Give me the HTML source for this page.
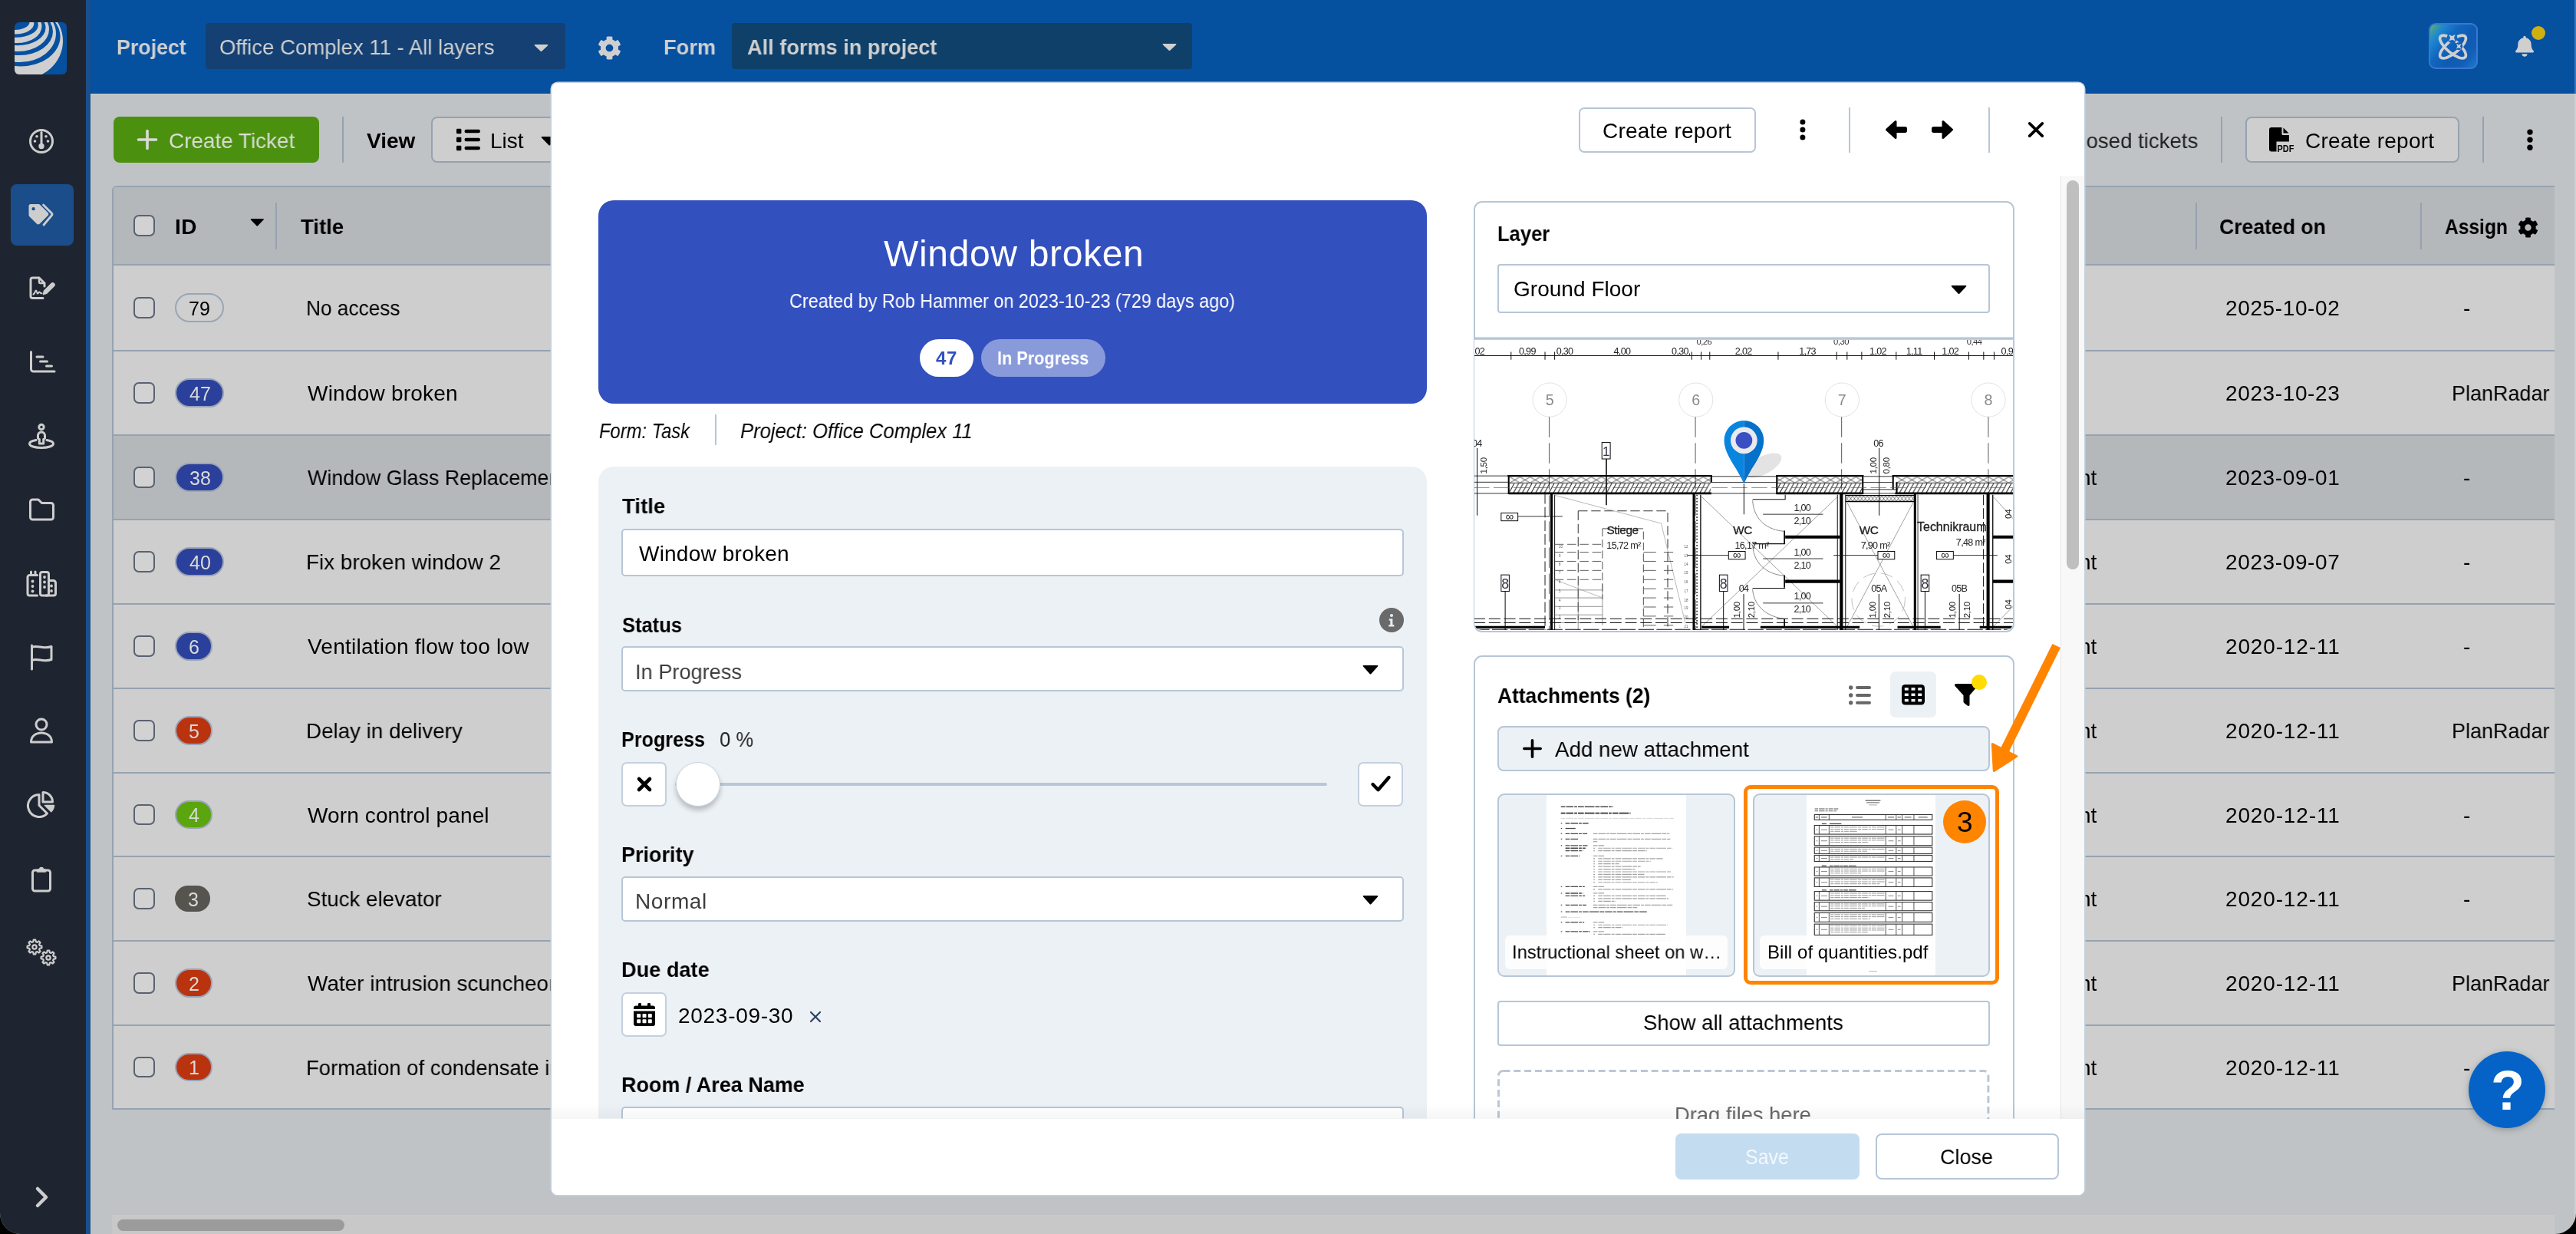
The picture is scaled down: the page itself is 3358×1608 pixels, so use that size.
<!DOCTYPE html>
<html lang="en"><head><meta charset="utf-8"><title>PlanRadar - Tickets</title>
<style>
html,body{margin:0;padding:0;background:#000;overflow:hidden}
body{width:3358px;height:1608px;position:relative;font-family:"Liberation Sans", sans-serif}
#app{position:absolute;left:0;top:0;width:3358px;height:1608px;overflow:hidden;background:#bfc3c6;border-radius:0 0 27px 27px}
#app div,#app svg,#app span{position:absolute}
#app svg{overflow:visible;display:block}
.t{white-space:nowrap;line-height:1;transform-origin:0 0;will-change:transform}
</style></head><body><div id="app">
<div style="left:0px;top:0px;width:112px;height:1608px;background:#1f2530"></div>
<div style="left:112px;top:0px;width:6px;height:1608px;background:#1b4f8c"></div>
<svg style="left:19px;top:29px;" width="68" height="68" viewBox="0 0 68 68"><defs><clipPath id="lg"><rect width="68" height="68" rx="6"/></clipPath></defs><g clip-path="url(#lg)"><rect width="68" height="68" fill="#0650a0"/><path d="M-22.98 1.77A24.14 13.75 0 1 0 25.30 1.77A24.14 13.75 0 1 0 -22.98 1.77ZM-19.50 0.00A19.50 9.90 0 1 0 19.50 0.00A19.50 9.90 0 1 0 -19.50 0.00Z" fill="#cfcfcf" fill-rule="evenodd"/><path d="M-29.10 5.37A32.30 21.74 0 1 0 35.50 5.37A32.30 21.74 0 1 0 -29.10 5.37ZM-26.28 3.76A28.54 15.99 0 1 0 30.80 3.76A28.54 15.99 0 1 0 -26.28 3.76Z" fill="#cfcfcf" fill-rule="evenodd"/><path d="M-34.80 9.22A39.90 28.81 0 1 0 45.00 9.22A39.90 28.81 0 1 0 -34.80 9.22ZM-32.10 7.18A36.30 23.08 0 1 0 40.50 7.18A36.30 23.08 0 1 0 -32.10 7.18Z" fill="#cfcfcf" fill-rule="evenodd"/><path d="M-40.20 14.71A47.10 37.39 0 1 0 54.00 14.71A47.10 37.39 0 1 0 -40.20 14.71ZM-37.80 12.21A43.90 30.79 0 1 0 50.00 12.21A43.90 30.79 0 1 0 -37.80 12.21Z" fill="#cfcfcf" fill-rule="evenodd"/><path d="M-45.60 24.48A54.30 50.17 0 1 0 63.00 24.48A54.30 50.17 0 1 0 -45.60 24.48ZM-43.50 18.80A51.50 38.67 0 1 0 59.50 18.80A51.50 38.67 0 1 0 -43.50 18.80Z" fill="#cfcfcf" fill-rule="evenodd"/></g></svg>
<div style="left:14px;top:240px;width:82px;height:79.5px;background:#1b4d8b;border-radius:8px"></div>
<svg style="left:33.5px;top:163.5px;" width="40" height="40" viewBox="0 0 40 40"><g fill="none" stroke="#cdcdcd" stroke-width="3" stroke-linecap="round" stroke-linejoin="round"><circle cx="20" cy="20" r="14.5"/><path d="M20 8.5V26"/><circle cx="20" cy="26.5" r="2.2" fill="#cdcdcd"/><g stroke-width="0" fill="#cdcdcd"><circle cx="11.5" cy="20" r="1.8"/><circle cx="28.5" cy="20" r="1.8"/><circle cx="14" cy="13.7" r="1.8"/><circle cx="26" cy="13.7" r="1.8"/></g></g></svg>
<svg style="left:32px;top:259.5px;" width="40" height="40" viewBox="0 0 40 40"><path d="M5.5 8.5 a2.5 2.5 0 0 1 2.5-2.5 h10.2 a3 3 0 0 1 2.1 .9 l10 10 a3 3 0 0 1 0 4.2 l-10.4 10.4 a3 3 0 0 1-4.2 0 l-9.3-9.3 a3 3 0 0 1-.9-2.1z" fill="#cdcdcd"/><circle cx="11.6" cy="12.2" r="2.1" fill="#1b4d8b"/><path d="M24.5 7 L35.3 17.8 a2.2 2.2 0 0 1 0 3 L25 33" fill="none" stroke="#cdcdcd" stroke-width="2.8" stroke-linecap="round"/></svg>
<svg style="left:33.5px;top:355.7px;" width="40" height="40" viewBox="0 0 40 40"><g fill="none" stroke="#cdcdcd" stroke-width="3" stroke-linecap="round" stroke-linejoin="round"><path d="M22 32.5H8.5a2.5 2.5 0 0 1-2.500-2.500V8.5A2.5 2.500 0 0 1 8.500 6H17l7 7v4"/><path d="M17 6v5.500a1.500 1.500 0 0 0 1.500 1.500H24" stroke-width="2.4"/><path d="M9.5 27.5c2-1 2.500-5 3.500-5s.8 4 2 4 1.200-2 2.200-2 1 1.800 3.300 1.800" stroke-width="2"/><path d="M22.500 27.500l1-4.500 9.500-9.500a2.300 2.300 0 0 1 3.300 3.300l-9.500 9.500z" fill="#cdcdcd" stroke-width="1.500"/></g></svg>
<svg style="left:33.5px;top:451.8px;" width="40" height="40" viewBox="0 0 40 40"><g fill="none" stroke="#cdcdcd" stroke-width="3" stroke-linecap="round" stroke-linejoin="round"><path d="M6.5 6.500V29a3 3 0 0 0 3 3H37"/><path d="M14 13h8M18.500 19h9M26.500 25h7" stroke-width="3"/></g></svg>
<svg style="left:33.5px;top:547.9px;" width="40" height="40" viewBox="0 0 40 40"><g fill="none" stroke="#cdcdcd" stroke-width="3" stroke-linecap="round" stroke-linejoin="round"><circle cx="20" cy="8.500" r="3.200"/><path d="M15.500 19.500a4.500 4.500 0 0 1 9 0v3.500l-1.800 1.500V30h-5.400v-5.500l-1.800-1.500z"/><path d="M13 25.500c-5 .8-8.500 2.600-8.500 4.700 0 3 6.900 5.300 15.500 5.300s15.500-2.300 15.500-5.300c0-2.100-3.500-3.900-8.500-4.700"/></g></svg>
<svg style="left:33.5px;top:644px;" width="40" height="40" viewBox="0 0 40 40"><g fill="none" stroke="#cdcdcd" stroke-width="3" stroke-linecap="round" stroke-linejoin="round"><path d="M5.500 10a3 3 0 0 1 3-3h7.500l4.500 4.500H32.500a3 3 0 0 1 3 3V30a3 3 0 0 1-3 3h-24a3 3 0 0 1-3-3z"/></g></svg>
<svg style="left:33.5px;top:740.1px;" width="40" height="40" viewBox="0 0 40 40"><g fill="none" stroke="#cdcdcd" stroke-width="3" stroke-linecap="round" stroke-linejoin="round"><path d="M14.500 36H4.500a2.500 2.500 0 0 1-2.500-2.500V12a2.500 2.500 0 0 1 2.500-2.500H14.500"/><path d="M6.500 9V5M12 9V5"/><rect x="18.500" y="5.500" width="11" height="30.500" rx="2.500"/><path d="M29.500 16.500h6a3 3 0 0 1 3 3V33.500a2.500 2.500 0 0 1-2.500 2.500H26"/><g stroke-width="0" fill="#cdcdcd"><circle cx="8.500" cy="17.500" r="1.900"/><circle cx="8.500" cy="24" r="1.900"/><circle cx="8.500" cy="30.500" r="1.900"/><circle cx="24" cy="12" r="1.900"/><circle cx="24" cy="18.500" r="1.900"/><circle cx="24" cy="25" r="1.900"/><circle cx="33" cy="23.500" r="1.900"/><circle cx="33" cy="30" r="1.900"/></g></g></svg>
<svg style="left:33.5px;top:836.2px;" width="40" height="40" viewBox="0 0 40 40"><g fill="none" stroke="#cdcdcd" stroke-width="3" stroke-linecap="round" stroke-linejoin="round"><path d="M7.500 5v31"/><path d="M7.500 7.500c8-3.500 14 3 25.500-1v17c-11.500 4-17.500-2.500-25.500 1"/></g></svg>
<svg style="left:33.5px;top:932.3px;" width="40" height="40" viewBox="0 0 40 40"><g fill="none" stroke="#cdcdcd" stroke-width="3" stroke-linecap="round" stroke-linejoin="round"><circle cx="20" cy="12" r="7"/><path d="M6.500 35c0-7.500 6-12 13.500-12s13.500 4.500 13.500 12z"/></g></svg>
<svg style="left:33.5px;top:1028.4px;" width="40" height="40" viewBox="0 0 40 40"><g fill="none" stroke="#cdcdcd" stroke-width="3" stroke-linecap="round" stroke-linejoin="round"><path d="M17 7.500A14.500 14.500 0 1 0 27.500 32L17 21.500z"/><path d="M22 4.500v12.500h12.500A12.500 12.500 0 0 0 22 4.500z"/><path d="M24.500 21.500h12a13 13 0 0 1-3.700 8.300z" fill="#cdcdcd" stroke-width="1.500"/></g></svg>
<svg style="left:33.5px;top:1124.5px;" width="40" height="40" viewBox="0 0 40 40"><g fill="none" stroke="#cdcdcd" stroke-width="3" stroke-linecap="round" stroke-linejoin="round"><rect x="8.500" y="9" width="23" height="27" rx="3"/><path d="M14.500 9.500c0-1.500 2-2 3-2a2.600 2.600 0 0 1 5 0c1 0 3 .5 3 2v1.500h-11z" fill="#cdcdcd" stroke-width="1.500"/></g></svg>
<svg style="left:33.5px;top:1220.6px;" width="40" height="40" viewBox="0 0 40 40"><g fill="none" stroke="#cdcdcd" stroke-width="3" stroke-linecap="round" stroke-linejoin="round"><path d="M20.42 11.77 L20.42 14.23 L17.79 14.83 L17.09 16.51 L18.53 18.79 L16.79 20.53 L14.51 19.09 L12.83 19.79 L12.23 22.42 L9.77 22.42 L9.17 19.79 L7.49 19.09 L5.21 20.53 L3.47 18.79 L4.91 16.51 L4.21 14.83 L1.58 14.23 L1.58 11.77 L4.21 11.17 L4.91 9.49 L3.47 7.21 L5.21 5.47 L7.49 6.91 L9.17 6.21 L9.77 3.58 L12.23 3.58 L12.83 6.21 L14.51 6.91 L16.79 5.47 L18.53 7.21 L17.09 9.49 L17.79 11.17Z" stroke-width="2.200"/><circle cx="11" cy="13" r="2.66" stroke-width="2.200"/><path d="M38.42 25.77 L38.42 28.23 L35.79 28.83 L35.09 30.51 L36.53 32.79 L34.79 34.53 L32.51 33.09 L30.83 33.79 L30.23 36.42 L27.77 36.42 L27.17 33.79 L25.49 33.09 L23.21 34.53 L21.47 32.79 L22.91 30.51 L22.21 28.83 L19.58 28.23 L19.58 25.77 L22.21 25.17 L22.91 23.49 L21.47 21.21 L23.21 19.47 L25.49 20.91 L27.17 20.21 L27.77 17.58 L30.23 17.58 L30.83 20.21 L32.51 20.91 L34.79 19.47 L36.53 21.21 L35.09 23.49 L35.79 25.17Z" stroke-width="2.200"/><circle cx="29" cy="27" r="2.66" stroke-width="2.200"/></g></svg>
<svg style="left:36px;top:1542px;" width="36" height="36" viewBox="0 0 36 36"><path d="M13 7l11 11-11 11" fill="none" stroke="#cdcdcd" stroke-width="4.500" stroke-linecap="round" stroke-linejoin="round"/></svg>
<div style="left:118px;top:0px;width:3240px;height:121.5px;background:#0650a0;border-bottom:1px solid #034597;box-sizing:border-box"></div>
<span class="t" style="left:151.64px;top:48.2px;font-size:28px;color:#cfcfcf;font-weight:700;transform:scaleX(0.9551);">Project</span>
<div style="left:267.5px;top:30px;width:469.5px;height:59.7px;background:#144073;border-radius:4px"></div>
<span class="t" style="left:286.02px;top:48.2px;font-size:28px;color:#cfcfcf;transform:scaleX(0.9830);">Office Complex 11 - All layers</span>
<svg style="left:695.8px;top:58.25px;" width="19" height="9.5" viewBox="0 0 19 9.5"><path d="M1.500 0H17.5Q19 0 18 1.500L10.5 8.5Q9.5 9.5 8.5 8.5L1 1.500Q0 0 1.500 0Z" fill="#cfcfcf"/></svg>
<svg style="left:779.1px;top:46.5px;" width="31" height="31" viewBox="0 0 512 512"><path d="M487.4 315.700l-42.600-24.600c4.300-23.200 4.300-47 0-70.200l42.600-24.600c4.900-2.800 7.100-8.600 5.500-14-11.100-35.600-30-67.800-54.700-94.600-3.800-4.100-10-5.100-14.800-2.300L380.800 110c-17.900-15.400-38.500-27.300-60.800-35.100V25.800c0-5.600-3.900-10.500-9.400-11.700-36.700-8.200-74.300-7.800-109.200 0-5.500 1.200-9.400 6.100-9.400 11.700V75c-22.200 7.900-42.800 19.800-60.800 35.100L88.700 85.500c-4.900-2.800-11-1.900-14.800 2.300-24.700 26.700-43.600 58.900-54.700 94.600-1.700 5.400.6 11.200 5.500 14L67.300 221c-4.300 23.200-4.300 47 0 70.200l-42.600 24.600c-4.900 2.800-7.100 8.600-5.500 14 11.100 35.600 30 67.800 54.700 94.600 3.800 4.100 10 5.100 14.800 2.300l42.600-24.600c17.900 15.400 38.500 27.300 60.800 35.100v49.200c0 5.600 3.900 10.500 9.400 11.700 36.700 8.200 74.300 7.800 109.200 0 5.500-1.200 9.400-6.100 9.400-11.700v-49.200c22.200-7.900 42.800-19.800 60.800-35.100l42.600 24.600c4.900 2.800 11 1.900 14.800-2.300 24.700-26.700 43.600-58.900 54.700-94.600 1.500-5.500-.7-11.300-5.600-14.100zM256 336c-44.100 0-80-35.900-80-80s35.900-80 80-80 80 35.900 80 80-35.900 80-80 80z" fill="#cfcfcf"/></svg>
<span class="t" style="left:864.83px;top:48.4px;font-size:28px;color:#cfcfcf;font-weight:700;transform:scaleX(0.9750);">Form</span>
<div style="left:954px;top:30px;width:600px;height:59.7px;background:#0f4069;border-radius:4px"></div>
<span class="t" style="left:974px;top:48.4px;font-size:28px;color:#cfcfcf;font-weight:700;transform:scaleX(0.9693);">All forms in project</span>
<svg style="left:1515px;top:57.25px;" width="19" height="9.5" viewBox="0 0 19 9.5"><path d="M1.500 0H17.5Q19 0 18 1.500L10.5 8.5Q9.5 9.5 8.5 8.5L1 1.500Q0 0 1.500 0Z" fill="#cfcfcf"/></svg>
<div style="left:3166.2px;top:30px;width:63.8px;height:60px;background:linear-gradient(128deg,#72b955 0%,#3c9aa5 9%,#1b86d0 20%,#1266be 38%,#0f5ab3 60%,#125fb8 80%,#1c7bcd 100%);border-radius:9px;border:2px solid #3877d1;box-sizing:border-box"></div>
<svg style="left:3166px;top:30px;" width="64" height="60" viewBox="0 0 64 60"><g fill="none" stroke="#cfcfcf" stroke-width="3.700" stroke-linecap="round"><ellipse cx="31.500" cy="31" rx="21" ry="8" transform="rotate(40 31.500 31)"/><ellipse cx="31.500" cy="31" rx="21" ry="8" transform="rotate(-40 31.500 31)"/></g><circle cx="30.500" cy="19.300" r="6.800" fill="#1367c0"/><circle cx="39.200" cy="30.300" r="5" fill="#105db6"/><path d="M30.500 13.300l1.700 4.300 4.300 1.700-4.300 1.700-1.700 4.300-1.700-4.300-4.300-1.700 4.300-1.700z" fill="#cfcfcf" transform="rotate(45 30.500 19.300)"/><path d="M39.200 25.800l1.300 3.200 3.200 1.300-3.200 1.300-1.300 3.200-1.300-3.200-3.200-1.300 3.200-1.300z" fill="#cfcfcf" transform="rotate(45 39.200 30.300)"/></svg>
<svg style="left:3278px;top:45.3px;" width="26" height="30" viewBox="0 1 30 33.500"><path d="M15 2.500a2 2 0 0 1 2 2v.8c4.600 1 8 4.800 8 9.700 0 5.500 1.500 8 3.500 10 .8.800.3 2.500-1 2.500H2.500c-1.300 0-1.800-1.700-1-2.500 2-2 3.500-4.500 3.500-10 0-4.900 3.400-8.700 8-9.700v-.8a2 2 0 0 1 2-2z" fill="#cfcfcf"/><path d="M11 29.500h8a4 4 0 0 1-8 0z" fill="#cfcfcf"/></svg>
<div style="left:3299.9px;top:33.8px;width:18.2px;height:18.2px;background:#cfaf12;border-radius:50%"></div>
<div style="left:3356px;top:0px;width:2px;height:1608px;background:rgba(255,255,255,.22)"></div>
<div style="left:118px;top:122px;width:3240px;height:1px;background:#c7cacc"></div>
<div style="left:118px;top:122px;width:1px;height:1486px;background:#c7cacc"></div>
<div style="left:148px;top:152px;width:268px;height:60px;background:#4c9010;border-radius:8px"></div>
<svg style="left:179px;top:169.2px;" width="26" height="26" viewBox="0 0 26 26"><path d="M13 1.500v23M1.500 13h23" stroke="#d9ddd5" stroke-width="3.600" stroke-linecap="round"/></svg>
<span class="t" style="left:219.6px;top:169.7px;font-size:28px;color:#d9ddd5;transform:scaleX(0.9959);">Create Ticket</span>
<div style="left:446px;top:152px;width:2px;height:60px;background:#96a2b0"></div>
<span class="t" style="left:477.8px;top:169.7px;font-size:28px;color:#000;font-weight:700;transform:scaleX(0.9949);">View</span>
<div style="left:562px;top:152px;width:260px;height:59.5px;box-sizing:border-box;border:2px solid #96a2b0;border-radius:8px;background:#cecece"></div>
<svg style="left:595px;top:167px;" width="31" height="30" viewBox="0 0 31 30"><g fill="#000"><rect x="0" y="0.7999999999999998" width="6.400" height="6.400" rx="1.200"/><rect x="10.500" y="1.7999999999999998" width="20.500" height="4.400" rx="2.200"/><rect x="0" y="11.8" width="6.400" height="6.400" rx="1.200"/><rect x="10.500" y="12.8" width="20.500" height="4.400" rx="2.200"/><rect x="0" y="22.8" width="6.400" height="6.400" rx="1.200"/><rect x="10.500" y="23.8" width="20.500" height="4.400" rx="2.200"/></g></svg>
<span class="t" style="left:639px;top:169.7px;font-size:28px;color:#000;transform:scaleX(0.9978);">List</span>
<svg style="left:705.25px;top:177.5px;" width="22.5" height="12" viewBox="0 0 22.5 12"><path d="M1.500 0H21.0Q22.5 0 21.5 1.500L12.25 11Q11.25 12 10.25 11L1 1.500Q0 0 1.500 0Z" fill="#000"/></svg>
<span class="t" style="left:2623.42px;top:169.7px;font-size:28px;color:#222;transform:scaleX(0.9853);">Show closed tickets</span>
<div style="left:2895px;top:152px;width:2px;height:60px;background:#96a2b0"></div>
<div style="left:2927px;top:152px;width:278.5px;height:59.5px;box-sizing:border-box;border:2px solid #96a2b0;border-radius:8px;background:#cecece"></div>
<svg style="left:2958px;top:166px;will-change:transform" width="34" height="32" viewBox="0 0 34 32"><path d="M3 0h13.500v8.500a1.500 1.500 0 0 0 1.500 1.500H26v8.500H9.500V31.500H3a3 3 0 0 1-3-3V3a3 3 0 0 1 3-3z" fill="#000"/><path d="M18.500 0.500l7 7h-7z" fill="#000"/><text x="10.500" y="31.500" font-family='"Liberation Sans", sans-serif' font-weight="700" font-size="12.500" fill="#000" textLength="22" lengthAdjust="spacingAndGlyphs">PDF</text></svg>
<span class="t" style="left:3005px;top:169.7px;font-size:28px;color:#000;letter-spacing:0.26px;">Create report</span>
<div style="left:3236px;top:152px;width:2px;height:60px;background:#96a2b0"></div>
<svg style="left:3292px;top:165px;" width="12" height="36" viewBox="0 0 12 36"><circle cx="6" cy="7.100" r="3.700"/><circle cx="6" cy="17.100" r="3.700"/><circle cx="6" cy="27.200" r="3.700"/></svg>
<div style="left:146px;top:242px;width:3184px;height:1204px;box-sizing:border-box;border:2px solid #96a2b0;border-right:none;border-radius:6px 0 0 0;background:#cecece"></div>
<div style="left:148px;top:244px;width:3182px;height:100px;background:#b4b8bb;border-radius:4px 0 0 0"></div>
<div style="left:146px;top:344px;width:3184px;height:2px;background:#96a2b0"></div>
<div style="left:174.3px;top:280.2px;width:27.5px;height:27.5px;box-sizing:border-box;border:2px solid #596270;border-radius:7px;background:#d2d2d2"></div>
<span class="t" style="left:228.3px;top:281.6px;font-size:28px;color:#000;font-weight:700;letter-spacing:0.52px;">ID</span>
<svg style="left:325.55px;top:285px;" width="18.5" height="10" viewBox="0 0 18.5 10"><path d="M1.500 0H17.0Q18.5 0 17.5 1.500L10.25 9Q9.25 10 8.25 9L1 1.500Q0 0 1.500 0Z" fill="#000"/></svg>
<div style="left:359px;top:264px;width:2px;height:61px;background:#96a2b0"></div>
<div style="left:2862px;top:264px;width:2px;height:61px;background:#96a2b0"></div>
<div style="left:3155px;top:264px;width:2px;height:61px;background:#96a2b0"></div>
<span class="t" style="left:392px;top:281.6px;font-size:28px;color:#000;font-weight:700;transform:scaleX(0.9826);">Title</span>
<span class="t" style="left:2893.05px;top:281.6px;font-size:28px;color:#000;font-weight:700;transform:scaleX(0.9490);">Created on</span>
<span class="t" style="left:3187.4px;top:281.6px;font-size:28px;color:#000;font-weight:700;transform:scaleX(0.8770);">Assign</span>
<svg style="left:3281.5px;top:282.5px;" width="27" height="27" viewBox="0 0 512 512"><path d="M487.4 315.700l-42.600-24.600c4.300-23.200 4.300-47 0-70.200l42.600-24.600c4.900-2.800 7.100-8.600 5.500-14-11.100-35.600-30-67.800-54.700-94.600-3.800-4.100-10-5.100-14.800-2.300L380.800 110c-17.900-15.400-38.500-27.300-60.800-35.100V25.800c0-5.600-3.900-10.500-9.400-11.700-36.700-8.200-74.300-7.800-109.200 0-5.500 1.200-9.400 6.100-9.400 11.700V75c-22.200 7.900-42.800 19.800-60.800 35.100L88.700 85.500c-4.900-2.800-11-1.900-14.800 2.300-24.700 26.700-43.600 58.900-54.700 94.600-1.700 5.400.6 11.200 5.500 14L67.300 221c-4.300 23.200-4.300 47 0 70.200l-42.600 24.600c-4.900 2.800-7.100 8.600-5.500 14 11.100 35.600 30 67.800 54.700 94.600 3.800 4.100 10 5.100 14.800 2.300l42.600-24.600c17.900 15.400 38.500 27.300 60.800 35.100v49.200c0 5.600 3.900 10.500 9.400 11.700 36.700 8.200 74.300 7.800 109.200 0 5.500-1.200 9.400-6.100 9.400-11.700v-49.200c22.200-7.900 42.800-19.800 60.800-35.100l42.600 24.600c4.900 2.800 11 1.900 14.800-2.300 24.700-26.700 43.600-58.900 54.700-94.600 1.500-5.500-.7-11.300-5.600-14.100zM256 336c-44.100 0-80-35.900-80-80s35.900-80 80-80 80 35.900 80 80-35.900 80-80 80z" fill="#000"/></svg>
<div style="left:146px;top:456px;width:3184px;height:2px;background:#96a2b0"></div>
<div style="left:174.3px;top:387.25px;width:27.5px;height:27.5px;box-sizing:border-box;border:2px solid #596270;border-radius:7px;background:#d2d2d2"></div>
<div style="left:228.3px;top:382.35px;width:63.5px;height:37.3px;box-sizing:border-box;border:2px solid #98a6b5;border-radius:19px;background:#cfcfcf"></div>
<span class="t" style="left:246.1px;top:389.84px;font-size:25px;color:#000;">79</span>
<span class="t" style="left:399.33px;top:388.3px;font-size:28px;color:#000;transform:scaleX(0.9364);">No access</span>
<span class="t" style="left:2901px;top:388.3px;font-size:28px;color:#000;letter-spacing:0.62px;">2025-10-02</span>
<span class="t" style="left:3210.5px;top:388.3px;font-size:28px;color:#000;">-</span>
<div style="left:146px;top:566px;width:3184px;height:2px;background:#96a2b0"></div>
<div style="left:174.3px;top:498.25px;width:27.5px;height:27.5px;box-sizing:border-box;border:2px solid #596270;border-radius:7px;background:#d2d2d2"></div>
<div style="left:228.3px;top:493.35px;width:63.5px;height:37.3px;box-sizing:border-box;border:2px solid #9aa3b8;border-radius:19px;background:#2a409a"></div>
<span class="t" style="left:246.6px;top:500.84px;font-size:25px;color:#dadada;">47</span>
<span class="t" style="left:401.2px;top:499.3px;font-size:28px;color:#000;letter-spacing:0.22px;">Window broken</span>
<span class="t" style="left:2901px;top:499.3px;font-size:28px;color:#000;letter-spacing:0.62px;">2023-10-23</span>
<span class="t" style="left:3196.37px;top:499.3px;font-size:28px;color:#000;transform:scaleX(0.9632);">PlanRadar</span>
<div style="left:148px;top:568px;width:3182px;height:108px;background:#b4b8bb"></div>
<div style="left:146px;top:676px;width:3184px;height:2px;background:#96a2b0"></div>
<div style="left:174.3px;top:608.25px;width:27.5px;height:27.5px;box-sizing:border-box;border:2px solid #596270;border-radius:7px;background:#d2d2d2"></div>
<div style="left:228.3px;top:603.35px;width:63.5px;height:37.3px;box-sizing:border-box;border:2px solid #9aa3b8;border-radius:19px;background:#2a409a"></div>
<span class="t" style="left:246.6px;top:610.84px;font-size:25px;color:#dadada;">38</span>
<span class="t" style="left:401.2px;top:609.3px;font-size:28px;color:#000;transform:scaleX(0.9574);">Window Glass Replacement</span>
<span class="t" style="left:2710.43px;top:609.3px;font-size:28px;color:#000;">nt</span>
<span class="t" style="left:2901px;top:609.3px;font-size:28px;color:#000;letter-spacing:0.62px;">2023-09-01</span>
<span class="t" style="left:3210.5px;top:609.3px;font-size:28px;color:#000;">-</span>
<div style="left:146px;top:786px;width:3184px;height:2px;background:#96a2b0"></div>
<div style="left:174.3px;top:718.25px;width:27.5px;height:27.5px;box-sizing:border-box;border:2px solid #596270;border-radius:7px;background:#d2d2d2"></div>
<div style="left:228.3px;top:713.35px;width:63.5px;height:37.3px;box-sizing:border-box;border:2px solid #9aa3b8;border-radius:19px;background:#2a409a"></div>
<span class="t" style="left:246.6px;top:720.84px;font-size:25px;color:#dadada;">40</span>
<span class="t" style="left:399.21px;top:719.3px;font-size:28px;color:#000;transform:scaleX(0.9946);">Fix broken window 2</span>
<span class="t" style="left:2710.43px;top:719.3px;font-size:28px;color:#000;">nt</span>
<span class="t" style="left:2901px;top:719.3px;font-size:28px;color:#000;letter-spacing:0.62px;">2023-09-07</span>
<span class="t" style="left:3210.5px;top:719.3px;font-size:28px;color:#000;">-</span>
<div style="left:146px;top:896px;width:3184px;height:2px;background:#96a2b0"></div>
<div style="left:174.3px;top:828.25px;width:27.5px;height:27.5px;box-sizing:border-box;border:2px solid #596270;border-radius:7px;background:#d2d2d2"></div>
<div style="left:228.3px;top:823.35px;width:49px;height:37.3px;box-sizing:border-box;border:2px solid #9aa3b8;border-radius:19px;background:#2a409a"></div>
<span class="t" style="left:245.8px;top:830.84px;font-size:25px;color:#dadada;">6</span>
<span class="t" style="left:401.2px;top:829.3px;font-size:28px;color:#000;letter-spacing:0.23px;">Ventilation flow too low</span>
<span class="t" style="left:2710.43px;top:829.3px;font-size:28px;color:#000;">nt</span>
<span class="t" style="left:2901px;top:829.3px;font-size:28px;color:#000;letter-spacing:0.85px;">2020-12-11</span>
<span class="t" style="left:3210.5px;top:829.3px;font-size:28px;color:#000;">-</span>
<div style="left:146px;top:1006px;width:3184px;height:2px;background:#96a2b0"></div>
<div style="left:174.3px;top:938.25px;width:27.5px;height:27.5px;box-sizing:border-box;border:2px solid #596270;border-radius:7px;background:#d2d2d2"></div>
<div style="left:228.3px;top:933.35px;width:49px;height:37.3px;box-sizing:border-box;border:2px solid #9aa3b8;border-radius:19px;background:#b9330f"></div>
<span class="t" style="left:245.8px;top:940.84px;font-size:25px;color:#dadada;">5</span>
<span class="t" style="left:399.22px;top:939.3px;font-size:28px;color:#000;transform:scaleX(0.9920);">Delay in delivery</span>
<span class="t" style="left:2710.43px;top:939.3px;font-size:28px;color:#000;">nt</span>
<span class="t" style="left:2901px;top:939.3px;font-size:28px;color:#000;letter-spacing:0.85px;">2020-12-11</span>
<span class="t" style="left:3196.37px;top:939.3px;font-size:28px;color:#000;transform:scaleX(0.9632);">PlanRadar</span>
<div style="left:146px;top:1115px;width:3184px;height:2px;background:#96a2b0"></div>
<div style="left:174.3px;top:1047.75px;width:27.5px;height:27.5px;box-sizing:border-box;border:2px solid #596270;border-radius:7px;background:#d2d2d2"></div>
<div style="left:228.3px;top:1042.85px;width:49px;height:37.3px;box-sizing:border-box;border:2px solid #9aa3b8;border-radius:19px;background:#5ba50e"></div>
<span class="t" style="left:245.8px;top:1050.34px;font-size:25px;color:#dadada;">4</span>
<span class="t" style="left:401.2px;top:1048.8px;font-size:28px;color:#000;letter-spacing:0.12px;">Worn control panel</span>
<span class="t" style="left:2710.43px;top:1048.8px;font-size:28px;color:#000;">nt</span>
<span class="t" style="left:2901px;top:1048.8px;font-size:28px;color:#000;letter-spacing:0.85px;">2020-12-11</span>
<span class="t" style="left:3210.5px;top:1048.8px;font-size:28px;color:#000;">-</span>
<div style="left:146px;top:1225px;width:3184px;height:2px;background:#96a2b0"></div>
<div style="left:174.3px;top:1157.25px;width:27.5px;height:27.5px;box-sizing:border-box;border:2px solid #596270;border-radius:7px;background:#d2d2d2"></div>
<div style="left:228.3px;top:1153.85px;width:46px;height:34.3px;border-radius:19px;background:#55544e"></div>
<span class="t" style="left:244.8px;top:1159.84px;font-size:25px;color:#d9d9d9;">3</span>
<span class="t" style="left:400.21px;top:1158.3px;font-size:28px;color:#000;transform:scaleX(0.9904);">Stuck elevator</span>
<span class="t" style="left:2710.43px;top:1158.3px;font-size:28px;color:#000;">nt</span>
<span class="t" style="left:2901px;top:1158.3px;font-size:28px;color:#000;letter-spacing:0.85px;">2020-12-11</span>
<span class="t" style="left:3210.5px;top:1158.3px;font-size:28px;color:#000;">-</span>
<div style="left:146px;top:1335px;width:3184px;height:2px;background:#96a2b0"></div>
<div style="left:174.3px;top:1267.25px;width:27.5px;height:27.5px;box-sizing:border-box;border:2px solid #596270;border-radius:7px;background:#d2d2d2"></div>
<div style="left:228.3px;top:1262.35px;width:49px;height:37.3px;box-sizing:border-box;border:2px solid #9aa3b8;border-radius:19px;background:#b9330f"></div>
<span class="t" style="left:245.8px;top:1269.84px;font-size:25px;color:#dadada;">2</span>
<span class="t" style="left:401.2px;top:1268.3px;font-size:28px;color:#000;transform:scaleX(0.9974);">Water intrusion scuncheon</span>
<span class="t" style="left:2710.43px;top:1268.3px;font-size:28px;color:#000;">nt</span>
<span class="t" style="left:2901px;top:1268.3px;font-size:28px;color:#000;letter-spacing:0.85px;">2020-12-11</span>
<span class="t" style="left:3196.37px;top:1268.3px;font-size:28px;color:#000;transform:scaleX(0.9632);">PlanRadar</span>
<div style="left:174.3px;top:1376.75px;width:27.5px;height:27.5px;box-sizing:border-box;border:2px solid #596270;border-radius:7px;background:#d2d2d2"></div>
<div style="left:228.3px;top:1371.85px;width:49px;height:37.3px;box-sizing:border-box;border:2px solid #9aa3b8;border-radius:19px;background:#b9330f"></div>
<span class="t" style="left:245.8px;top:1379.34px;font-size:25px;color:#dadada;">1</span>
<span class="t" style="left:399.24px;top:1377.8px;font-size:28px;color:#000;transform:scaleX(0.9803);">Formation of condensate in room</span>
<span class="t" style="left:2710.43px;top:1377.8px;font-size:28px;color:#000;">nt</span>
<span class="t" style="left:2901px;top:1377.8px;font-size:28px;color:#000;letter-spacing:0.85px;">2020-12-11</span>
<span class="t" style="left:3210.5px;top:1377.8px;font-size:28px;color:#000;">-</span>
<div style="left:146px;top:1581.5px;width:3184px;height:26.5px;background:#c8c8c8;border-top:1px solid #c0c0c0"></div>
<div style="left:152.5px;top:1588.5px;width:296.5px;height:15px;background:#9b9b9b;border-radius:8px"></div>
<div style="left:718.5px;top:107.5px;width:1998.5px;height:1449.5px;background:#fff;border-radius:8px;box-shadow:0 0 0 1.500px #c4d1e1"></div>
<div style="left:2057.5px;top:139.5px;width:231.5px;height:59px;box-sizing:border-box;border:2px solid #b7c6d7;border-radius:7px;background:#fff"></div>
<span class="t" style="left:2089.3px;top:157px;font-size:28px;color:#000;letter-spacing:0.23px;">Create report</span>
<svg style="left:2344px;top:154px;" width="12" height="32" viewBox="0 0 12 32"><circle cx="5.900" cy="4.900" r="3.500"/><circle cx="5.900" cy="15.100" r="3.500"/><circle cx="5.900" cy="25.100" r="3.500"/></svg>
<div style="left:2410px;top:139.5px;width:2px;height:59px;background:#b7c6d7"></div>
<svg style="left:2456px;top:155px;" width="32" height="28" viewBox="0 0 32 28"><path d="M3.500 14L15 3.500V24.500Z" fill="#000" stroke="#000" stroke-width="3" stroke-linejoin="round"/><rect x="13" y="10.100" width="17" height="7.800" rx="2.600"/></svg>
<svg style="left:2516px;top:155px;" width="32" height="28" viewBox="0 0 32 28"><path d="M28.500 14L17 3.500V24.500Z" fill="#000" stroke="#000" stroke-width="3" stroke-linejoin="round"/><rect x="2" y="10.100" width="17" height="7.800" rx="2.600"/></svg>
<div style="left:2592px;top:139.5px;width:2px;height:59px;background:#b7c6d7"></div>
<svg style="left:2642px;top:157px;" width="24" height="24" viewBox="0 0 24 24"><path d="M3.700 3.900l16.600 16.200M20.300 3.900L3.700 20.100" fill="none" stroke="#000" stroke-width="3.700" stroke-linecap="round"/></svg>
<div style="left:0;top:0;width:3358px;height:1608px;clip-path:inset(228.5px 0 150.5px 0)"><div style="left:780px;top:261px;width:1080px;height:264.5px;background:#3350bf;border-radius:20px"></div>
<span class="t" style="left:1152px;top:306.77px;font-size:48px;color:#fff;letter-spacing:0.66px;">Window broken</span>
<span class="t" style="left:1029.35px;top:378.99px;font-size:26px;color:#fff;transform:scaleX(0.8993);">Created by Rob Hammer on 2023-10-23 (729 days ago)</span>
<div style="left:1199px;top:442px;width:69.8px;height:48.7px;background:#fff;border-radius:25px"></div>
<span class="t" style="left:1220.1px;top:455.28px;font-size:24px;color:#3350bf;font-weight:700;letter-spacing:0.65px;">47</span>
<div style="left:1279px;top:442px;width:161.6px;height:48.7px;background:#889ada;border-radius:25px"></div>
<span class="t" style="left:1300.1px;top:455.28px;font-size:24px;color:#fff;font-weight:700;transform:scaleX(0.9028);">In Progress</span>
<span class="t" style="left:781.1px;top:547.9px;font-size:28px;color:#000;font-style:italic;transform:scaleX(0.8490);">Form: Task</span>
<div style="left:932px;top:540px;width:2px;height:39.5px;background:#b7c6d7"></div>
<span class="t" style="left:964.8px;top:547.9px;font-size:28px;color:#000;font-style:italic;transform:scaleX(0.9151);">Project: Office Complex 11</span>
<div style="left:780px;top:608px;width:1080px;height:900px;background:#ecf1f6;border-radius:20px"></div>
<span class="t" style="left:810.5px;top:645.9px;font-size:28px;color:#000;font-weight:700;transform:scaleX(0.9844);">Title</span>
<div style="left:810.3px;top:688.7px;width:1019.3px;height:62.5px;box-sizing:border-box;border:2px solid #b7c6d7;border-radius:5px;background:#fff"></div>
<span class="t" style="left:832.6px;top:707.6px;font-size:28px;color:#000;letter-spacing:0.21px;">Window broken</span>
<span class="t" style="left:810.5px;top:800.5px;font-size:28px;color:#000;font-weight:700;transform:scaleX(0.9106);">Status</span>
<div style="left:1798px;top:792px;width:32px;height:32px;background:#6a6a6a;border-radius:50%"></div>
<svg style="left:1798px;top:792px;" width="32" height="32" viewBox="0 0 32 32"><circle cx="16" cy="10" r="2.100" fill="#e6ebf0"/><path d="M12.800 14.300h4.600v7.800h1.900v2.400h-7v-2.400h2v-5.400h-1.500z" fill="#e6ebf0"/></svg>
<div style="left:810.3px;top:842.3px;width:1019.3px;height:58.7px;box-sizing:border-box;border:2px solid #b7c6d7;border-radius:5px;background:#fff"></div>
<span class="t" style="left:827.56px;top:862.4px;font-size:28px;color:#3d3d3d;transform:scaleX(0.9702);">In Progress</span>
<svg style="left:1775.5px;top:867px;" width="21" height="12" viewBox="0 0 21 12"><path d="M1.500 0H19.5Q21 0 20 1.500L11.5 11Q10.5 12 9.5 11L1 1.500Q0 0 1.500 0Z" fill="#000"/></svg>
<span class="t" style="left:809.6px;top:950.4px;font-size:28px;color:#000;font-weight:700;transform:scaleX(0.8980);">Progress</span>
<span class="t" style="left:938.38px;top:950.4px;font-size:28px;color:#222;transform:scaleX(0.9169);">0 %</span>
<div style="left:810.3px;top:992.7px;width:59px;height:58.5px;box-sizing:border-box;border:2px solid #c4d0de;border-radius:7px;background:#fff"></div>
<svg style="left:829.8px;top:1011.5px;" width="20" height="20" viewBox="0 0 20 20"><path d="M3 3l14 14M17 3L3 17" fill="none" stroke="#000" stroke-width="4.600" stroke-linecap="round"/></svg>
<div style="left:880px;top:1019.6px;width:850px;height:4px;background:#b9c7d6;border-radius:2px"></div>
<div style="left:880.6px;top:992.6px;width:58px;height:58px;box-sizing:border-box;background:#fff;border:1.500px solid #c8d4e1;border-radius:50%;box-shadow:0 5px 6px rgba(0,0,0,.22)"></div>
<div style="left:1770.3px;top:992.7px;width:59px;height:58.5px;box-sizing:border-box;border:2px solid #c4d0de;border-radius:7px;background:#fff"></div>
<svg style="left:1786px;top:1009px;" width="28" height="24" viewBox="0 0 28 24"><path d="M3.500 13l7 7.200L24.500 4" fill="none" stroke="#000" stroke-width="4.400" stroke-linecap="round" stroke-linejoin="round"/></svg>
<span class="t" style="left:809.54px;top:1100.2px;font-size:28px;color:#000;font-weight:700;transform:scaleX(0.9635);">Priority</span>
<div style="left:810.3px;top:1142.4px;width:1019.3px;height:58.8px;box-sizing:border-box;border:2px solid #b7c6d7;border-radius:5px;background:#fff"></div>
<span class="t" style="left:827.5px;top:1161.1px;font-size:28px;color:#3d3d3d;letter-spacing:0.6px;">Normal</span>
<svg style="left:1775.5px;top:1166.5px;" width="21" height="12" viewBox="0 0 21 12"><path d="M1.500 0H19.5Q21 0 20 1.500L11.5 11Q10.5 12 9.5 11L1 1.500Q0 0 1.500 0Z" fill="#000"/></svg>
<span class="t" style="left:809.53px;top:1250.1px;font-size:28px;color:#000;font-weight:700;transform:scaleX(0.9694);">Due date</span>
<div style="left:810.3px;top:1292.7px;width:59px;height:58.5px;box-sizing:border-box;border:2px solid #c4d0de;border-radius:7px;background:#fff"></div>
<svg style="left:825.8px;top:1306.5px;" width="28" height="30" viewBox="0 0 28 30"><path d="M0 10.500h28V27a3 3 0 0 1-3 3H3a3 3 0 0 1-3-3z M0 8V6.500a3 3 0 0 1 3-3h22a3 3 0 0 1 3 3V8z" fill="#000"/><rect x="6" y="0" width="4" height="7" rx="1.200" fill="#000"/><rect x="18" y="0" width="4" height="7" rx="1.200" fill="#000"/><rect x="4.2" y="14.0" width="5" height="5" rx=".800" fill="#fff"/><rect x="11.5" y="14.0" width="5" height="5" rx=".800" fill="#fff"/><rect x="18.8" y="14.0" width="5" height="5" rx=".800" fill="#fff"/><rect x="4.2" y="21.3" width="5" height="5" rx=".800" fill="#fff"/><rect x="11.5" y="21.3" width="5" height="5" rx=".800" fill="#fff"/><rect x="18.8" y="21.3" width="5" height="5" rx=".800" fill="#fff"/></svg>
<span class="t" style="left:884px;top:1309.9px;font-size:28px;color:#000;letter-spacing:0.71px;">2023-09-30</span>
<svg style="left:1055px;top:1316.5px;" width="16" height="16" viewBox="0 0 16 16"><path d="M2 2l12 12M14 2L2 14" fill="none" stroke="#2e4460" stroke-width="2.200" stroke-linecap="round"/></svg>
<span class="t" style="left:809.54px;top:1400.2px;font-size:28px;color:#000;font-weight:700;transform:scaleX(0.9628);">Room / Area Name</span>
<div style="left:810.3px;top:1442.4px;width:1019.3px;height:62.5px;box-sizing:border-box;border:2px solid #b7c6d7;border-radius:5px;background:#fff"></div>
<div style="left:1921px;top:261.5px;width:704.5px;height:562px;box-sizing:border-box;border:2px solid #b7c6d7;border-radius:11px;background:#fff"></div>
<span class="t" style="left:1951.89px;top:290.6px;font-size:28px;color:#000;font-weight:700;transform:scaleX(0.9130);">Layer</span>
<div style="left:1952.4px;top:343.7px;width:641.4px;height:64.5px;box-sizing:border-box;border:2px solid #b7c6d7;border-radius:4px;background:#fff"></div>
<span class="t" style="left:1973px;top:363.4px;font-size:28px;color:#000;letter-spacing:0.03px;">Ground Floor</span>
<svg style="left:2543px;top:371.75px;" width="21" height="11.5" viewBox="0 0 21 11.5"><path d="M1.500 0H19.5Q21 0 20 1.500L11.5 10.5Q10.5 11.5 9.5 10.5L1 1.500Q0 0 1.500 0Z" fill="#000"/></svg>
<svg style="left:1900px;top:420px" width="860.100" height="420" viewBox="0 0 2527 1234"><defs><clipPath id="mapclip"><path d="M64 67H2128V1150a28 28 0 0 1-28 28H92a28 28 0 0 1-28-28z"/></clipPath><pattern id="hx" width="39" height="23" patternUnits="userSpaceOnUse" x="200" y="592"><path d="M0 23L39 0M0 0L39 23" fill="none" stroke="#2a2a2a" stroke-width="2.200"/></pattern><pattern id="hd" width="17" height="36" patternUnits="userSpaceOnUse" x="200" y="617"><path d="M-3 36L17 0M14 36L34 0M-20 36L0 0" fill="none" stroke="#111" stroke-width="3"/></pattern><pattern id="hs" width="14" height="20" patternUnits="userSpaceOnUse" x="1485" y="665"><path d="M0 0L14 20M14 0L0 20" fill="none" stroke="#333" stroke-width="2"/></pattern></defs><g clip-path="url(#mapclip)"><rect x="60" y="60" width="2075" height="1125" fill="#fff"/><path d="M62 128H2130" stroke="#111" stroke-width="3"/><path d="M205 113V143M335 113V143M372 113V143M897 113V143M933 113V143M966 113V143M1228 113V143M1452 113V143M1492 113V143M1548 113V143M1680 113V143M1826 113V143M1958 113V143M2015 113V143M2055 113V143" stroke="#111" stroke-width="3"/><g font-family='"Liberation Sans", sans-serif' font-size="37" fill="#222" letter-spacing="-2"><text x="66" y="122">02</text><text x="235" y="122">0,99</text><text x="378" y="122">0,30</text><text x="598" y="122">4,00</text><text x="820" y="122">0,30,</text><text x="1063" y="122">2,02</text><text x="1308" y="122">1,73</text><text x="1578" y="122">1,02</text><text x="1718" y="122">1,11</text><text x="1855" y="122">1,02</text><text x="2082" y="122">0,9</text></g><g font-family='"Liberation Sans", sans-serif' font-size="33" fill="#333" letter-spacing="-1.500"><text x="915" y="86">0,26</text><text x="1440" y="86">0,30</text><text x="1950" y="86">0,44</text></g><circle cx="353" cy="297" r="65" fill="#fff" stroke="#d4d4d4" stroke-width="2"/><text x="353" y="317" text-anchor="middle" font-family='"Liberation Sans", sans-serif' font-size="58" fill="#8a8a8a">5</text><circle cx="913" cy="297" r="65" fill="#fff" stroke="#d4d4d4" stroke-width="2"/><text x="913" y="317" text-anchor="middle" font-family='"Liberation Sans", sans-serif' font-size="58" fill="#8a8a8a">6</text><circle cx="1473" cy="297" r="65" fill="#fff" stroke="#d4d4d4" stroke-width="2"/><text x="1473" y="317" text-anchor="middle" font-family='"Liberation Sans", sans-serif' font-size="58" fill="#8a8a8a">7</text><circle cx="2033" cy="297" r="65" fill="#fff" stroke="#d4d4d4" stroke-width="2"/><text x="2033" y="317" text-anchor="middle" font-family='"Liberation Sans", sans-serif' font-size="58" fill="#8a8a8a">8</text><path d="M351 362V1180M911 362V1180M1471 362V1180M2033 362V1180" stroke="#444" stroke-width="2.600" stroke-dasharray="78 22" fill="none"/><text x="56" y="475" font-family='"Liberation Sans", sans-serif' font-size="37" fill="#222" letter-spacing="-2">04</text><path d="M75 482V740" stroke="#111" stroke-width="3"/><text transform="translate(112,580) rotate(-90)" font-family='"Liberation Sans", sans-serif' font-size="34" fill="#222" letter-spacing="-1">1,50</text><rect x="553" y="460" width="32" height="63" fill="#fff" stroke="#111" stroke-width="3"/><text x="569" y="510" text-anchor="middle" font-family='"Liberation Sans", sans-serif' font-size="50" fill="#334">1</text><path d="M570 523V700" stroke="#000" stroke-width="4.500"/><text x="1593" y="475" font-family='"Liberation Sans", sans-serif' font-size="37" fill="#222" letter-spacing="-2">06</text><path d="M1615 482V740" stroke="#111" stroke-width="3"/><text transform="translate(1603,580) rotate(-90)" font-family='"Liberation Sans", sans-serif' font-size="34" fill="#222" letter-spacing="-1">1,00</text><text transform="translate(1655,580) rotate(-90)" font-family='"Liberation Sans", sans-serif' font-size="34" fill="#222" letter-spacing="-1">0,80</text><ellipse cx="1170" cy="548" rx="78" ry="34" transform="rotate(-28 1170 548)" fill="rgba(0,0,0,.11)"/><rect x="200" y="592" width="770" height="23" fill="url(#hx)"/><rect x="200" y="617" width="770" height="36" fill="url(#hd)"/><path d="M200 615H970" stroke="#111" stroke-width="2.500"/><path d="M196 655H972" stroke="#000" stroke-width="8"/><rect x="1225" y="592" width="325" height="23" fill="url(#hx)"/><rect x="1225" y="617" width="325" height="36" fill="url(#hd)"/><path d="M1225 615H1550" stroke="#111" stroke-width="2.500"/><path d="M1221 655H1552" stroke="#000" stroke-width="8"/><rect x="1680" y="592" width="455" height="23" fill="url(#hx)"/><rect x="1680" y="617" width="455" height="36" fill="url(#hd)"/><path d="M1680 615H2135" stroke="#111" stroke-width="2.500"/><path d="M1676 655H2137" stroke="#000" stroke-width="8"/><path d="M192 588H975" stroke="#000" stroke-width="7"/><path d="M1220 588H1555" stroke="#000" stroke-width="7"/><path d="M1665 588H2135" stroke="#000" stroke-width="7"/><path d="M196 585V658M972 585V612M1223 585V658M1552 585V658M1668 585V640M1682 612V658" stroke="#000" stroke-width="6"/><path d="M62 588H196M62 612H196M62 655H196 M975 590H1220M968 613H1225M968 655H1225 M1555 590H1665M1552 613H1668M1552 640H1680M1552 655H1680" stroke="#111" stroke-width="2.500" fill="none"/><path d="M62 633H2135" stroke="#555" stroke-width="2" stroke-dasharray="60 16" fill="none"/><path d="M360 655V1180" stroke="#000" stroke-width="9"/><path d="M372 660V1180" stroke="#111" stroke-width="3"/><path d="M335 655V1180" stroke="#222" stroke-width="3" stroke-dasharray="40 12"/><path d="M905 655V1180" stroke="#000" stroke-width="9"/><path d="M931 660V1180" stroke="#111" stroke-width="4"/><path d="M917 660V1180" stroke="#333" stroke-width="5" stroke-dasharray="5 7"/><path d="M1470 655V1180" stroke="#000" stroke-width="12"/><path d="M1455 660V1180M1486 660V1180" stroke="#111" stroke-width="3"/><path d="M1752 655V1180" stroke="#000" stroke-width="9"/><path d="M1763 660V1180" stroke="#111" stroke-width="2.500"/><path d="M2032 655V1180" stroke="#000" stroke-width="12"/><path d="M2050 660V1180" stroke="#111" stroke-width="4"/><path d="M2014 660V1180" stroke="#222" stroke-width="3" stroke-dasharray="40 12"/><path d="M462 722H805V1180M462 722V1140" stroke="#333" stroke-width="3" stroke-dasharray="36 14" fill="none"/><path d="M555 790H712V1180M555 790V1060" stroke="#333" stroke-width="2.500" stroke-dasharray="30 12" fill="none"/><path d="M372 662L780 770L872 1150" stroke="#999" stroke-width="2" fill="none"/><path d="M372 850H555M372 880H555M372 915H555M372 950H555M372 985H555" stroke="#444" stroke-width="2.500" stroke-dasharray="34 14" fill="none"/><path d="M372 1025H555M372 1055H555M372 1088H555M372 1120H555M372 1150H555 M555 1000V1160M462 1010V1180" stroke="#666" stroke-width="2" fill="none"/><path d="M712 880H760M790 880H826M712 915H760M790 915H826M712 950H760M790 950H826M712 985H760M790 985H826M712 1020H760M790 1020H826M712 1055H760M790 1055H826M712 1090H760M790 1090H826M712 1125H760M790 1125H826M712 1160H760M790 1160H826" stroke="#444" stroke-width="2.500" fill="none"/><path d="M372 985L555 1055" stroke="#999" stroke-width="2"/><g font-family='"Liberation Sans", sans-serif' font-size="13" fill="#555"><text x="388" y="865">10</text><text x="388" y="898">9</text><text x="388" y="931">8</text><text x="388" y="965">7</text><text x="388" y="1000">6</text><text x="388" y="1035">5</text><text x="388" y="1068">4</text><text x="388" y="1100">3</text><text x="388" y="1133">2</text><text x="388" y="1168">1</text><text x="868" y="865">12</text><text x="868" y="898">13</text><text x="868" y="931">14</text><text x="868" y="965">15</text><text x="868" y="1000">16</text><text x="868" y="1035">17</text><text x="868" y="1068">18</text><text x="868" y="1100">19</text><text x="868" y="1133">20</text><text x="868" y="1168">21</text></g><text x="632" y="812" text-anchor="middle" font-family='"Liberation Sans", sans-serif' font-size="45" fill="#222" stroke="#222" stroke-width=".900" letter-spacing="-1">Stiege</text><text x="636" y="866" text-anchor="middle" font-family='"Liberation Sans", sans-serif' font-size="37" fill="#222" letter-spacing="-2">15,72 m²</text><rect x="167" y="730" width="64" height="30" fill="#fff" stroke="#111" stroke-width="3"/><text x="199" y="757" text-anchor="middle" font-family='"Liberation Sans", sans-serif' font-size="44" fill="#222">∞</text><path d="M232 743H402" stroke="#111" stroke-width="2.500"/><path d="M880 892H1038M1440 892H1610M1897 892H2068" stroke="#111" stroke-width="2.500"/><rect x="167" y="967" width="31" height="63" fill="#fff" stroke="#111" stroke-width="3"/><text x="182.5" y="1020" text-anchor="middle" font-family='"Liberation Sans", sans-serif' font-size="52" fill="#334">8</text><path d="M182.5 1030V1180" stroke="#111" stroke-width="3"/><rect x="1003" y="967" width="31" height="63" fill="#fff" stroke="#111" stroke-width="3"/><text x="1018.5" y="1020" text-anchor="middle" font-family='"Liberation Sans", sans-serif' font-size="52" fill="#334">8</text><path d="M1018.5 1030V1180" stroke="#111" stroke-width="3"/><rect x="1775" y="967" width="31" height="63" fill="#fff" stroke="#111" stroke-width="3"/><text x="1790.5" y="1020" text-anchor="middle" font-family='"Liberation Sans", sans-serif' font-size="52" fill="#334">8</text><path d="M1790.5 1030V1180" stroke="#111" stroke-width="3"/><path d="M935 668L1455 1165M935 1165L1455 668" stroke="#777" stroke-width="2" fill="none"/><path d="M1097 620V735" stroke="#111" stroke-width="3"/><path d="M1130 678H1255V660" stroke="#111" stroke-width="3" fill="none"/><path d="M1130 682C1135 760 1190 795 1250 800M1130 852C1135 930 1190 965 1250 970M1130 1022C1135 1090 1190 1128 1250 1135" stroke="#555" stroke-width="2" fill="none"/><path d="M1130 848H1255M1130 1018H1255" stroke="#111" stroke-width="3" fill="none"/><path d="M1255 822H1465" stroke="#000" stroke-width="12"/><path d="M1252 798V846" stroke="#000" stroke-width="5"/><path d="M1255 992H1465" stroke="#000" stroke-width="12"/><path d="M1252 968V1016" stroke="#000" stroke-width="5"/><path d="M1252 1135V1165" stroke="#000" stroke-width="5"/><g font-family='"Liberation Sans", sans-serif' font-size="37" fill="#222" letter-spacing="-2" text-anchor="middle"><text x="1320" y="722">1,00</text><text x="1320" y="772">2,10</text><text x="1320" y="892">1,00</text><text x="1320" y="942">2,10</text><text x="1320" y="1062">1,00</text><text x="1320" y="1112">2,10</text></g><path d="M1170 735H1400M1170 905H1400M1170 1075H1400" stroke="#111" stroke-width="2.500"/><text x="1092" y="812" text-anchor="middle" font-family='"Liberation Sans", sans-serif' font-size="45" fill="#222" stroke="#222" stroke-width=".900" letter-spacing="-1">WC</text><text x="1127" y="866" text-anchor="middle" font-family='"Liberation Sans", sans-serif' font-size="37" fill="#222" letter-spacing="-2">16,17 m²</text><rect x="1038" y="877" width="64" height="30" fill="#fff" stroke="#111" stroke-width="3"/><text x="1070" y="904" text-anchor="middle" font-family='"Liberation Sans", sans-serif' font-size="44" fill="#222">∞</text><text x="1096" y="1032" text-anchor="middle" font-family='"Liberation Sans", sans-serif' font-size="37" fill="#222" letter-spacing="-2">04</text><path d="M1096 1040V1180" stroke="#111" stroke-width="3"/><text transform="translate(1082,1132) rotate(-90)" font-family='"Liberation Sans", sans-serif' font-size="34" fill="#222" letter-spacing="-1">1,00</text><text transform="translate(1138,1132) rotate(-90)" font-family='"Liberation Sans", sans-serif' font-size="34" fill="#222" letter-spacing="-1">2,10</text><rect x="1486" y="665" width="265" height="20" fill="url(#hs)"/><path d="M1486 663H1752M1486 686H1752" stroke="#000" stroke-width="4"/><path d="M1492 690L1745 1165M1745 690L1492 1165" stroke="#777" stroke-width="2" fill="none"/><circle cx="1612" cy="1062" r="102" fill="none" stroke="#b5b5b5" stroke-width="2.500" stroke-dasharray="46 24"/><text x="1575" y="812" text-anchor="middle" font-family='"Liberation Sans", sans-serif' font-size="45" fill="#222" stroke="#222" stroke-width=".900" letter-spacing="-1">WC</text><text x="1600" y="866" text-anchor="middle" font-family='"Liberation Sans", sans-serif' font-size="37" fill="#222" letter-spacing="-2">7,90 m²</text><rect x="1610" y="877" width="64" height="30" fill="#fff" stroke="#111" stroke-width="3"/><text x="1642" y="904" text-anchor="middle" font-family='"Liberation Sans", sans-serif' font-size="44" fill="#222">∞</text><text x="1614" y="1032" text-anchor="middle" font-family='"Liberation Sans", sans-serif' font-size="37" fill="#222" letter-spacing="-2">05A</text><path d="M1614 1040V1180" stroke="#111" stroke-width="3"/><text transform="translate(1600,1132) rotate(-90)" font-family='"Liberation Sans", sans-serif' font-size="34" fill="#222" letter-spacing="-1">1,00</text><text transform="translate(1656,1132) rotate(-90)" font-family='"Liberation Sans", sans-serif' font-size="34" fill="#222" letter-spacing="-1">2,10</text><text x="1893" y="800" text-anchor="middle" font-family='"Liberation Sans", sans-serif' font-size="46" fill="#222" stroke="#222" stroke-width=".900" textLength="266" lengthAdjust="spacingAndGlyphs">Technikraum</text><text x="1965" y="855" text-anchor="middle" font-family='"Liberation Sans", sans-serif' font-size="37" fill="#222" letter-spacing="-2">7,48 m²</text><rect x="1835" y="877" width="64" height="30" fill="#fff" stroke="#111" stroke-width="3"/><text x="1867" y="904" text-anchor="middle" font-family='"Liberation Sans", sans-serif' font-size="44" fill="#222">∞</text><text x="1922" y="1032" text-anchor="middle" font-family='"Liberation Sans", sans-serif' font-size="37" fill="#222" letter-spacing="-2">05B</text><path d="M1922 1040V1180" stroke="#111" stroke-width="3"/><text transform="translate(1908,1132) rotate(-90)" font-family='"Liberation Sans", sans-serif' font-size="34" fill="#222" letter-spacing="-1">1,00</text><text transform="translate(1964,1132) rotate(-90)" font-family='"Liberation Sans", sans-serif' font-size="34" fill="#222" letter-spacing="-1">2,10</text><path d="M2050 822H2135M2050 992H2135" stroke="#000" stroke-width="12"/><path d="M2052 668L2135 760M2052 1165L2135 1080" stroke="#777" stroke-width="2"/><text transform="translate(2122,752) rotate(-90)" font-family='"Liberation Sans", sans-serif' font-size="34" fill="#222" letter-spacing="-1">04</text><text transform="translate(2122,925) rotate(-90)" font-family='"Liberation Sans", sans-serif' font-size="34" fill="#222" letter-spacing="-1">04</text><text transform="translate(2122,1098) rotate(-90)" font-family='"Liberation Sans", sans-serif' font-size="34" fill="#222" letter-spacing="-1">04</text><path d="M62 1135H2135M62 1150H2135" stroke="#111" stroke-width="3" stroke-dasharray="44 14" fill="none"/><path d="M62 1167H335M935 1167H1040M1160 1167H1540M1685 1167H1850M2000 1167H2135" stroke="#000" stroke-width="9"/><path d="M62 1176H2135" stroke="#111" stroke-width="3" stroke-dasharray="60 10"/><path d="M1097 620C1075 560 1021 510 1021 452A76 76 0 0 1 1097 376Z" fill="#0a85df"/><path d="M1097 620C1119 560 1173 510 1173 452A76 76 0 0 0 1097 376Z" fill="#0671cb"/><circle cx="1097" cy="452" r="51" fill="#e9eaee"/><circle cx="1097" cy="452" r="32" fill="#3b4fc5"/></g><rect x="64" y="57" width="2064" height="10" fill="#b7c6d7"/></svg>
<div style="left:1921px;top:854px;width:704.5px;height:700px;box-sizing:border-box;border:2px solid #b7c6d7;border-radius:11px;background:#fff"></div>
<span class="t" style="left:1952px;top:893.2px;font-size:28px;color:#000;font-weight:700;transform:scaleX(0.9417);">Attachments (2)</span>
<svg style="left:2410px;top:893px;" width="30" height="26" viewBox="0 0 30 26"><g fill="#666"><circle cx="2.700" cy="3" r="2.700"/><rect x="9" y="1" width="20" height="4" rx="2"/><circle cx="2.700" cy="13" r="2.700"/><rect x="9" y="11" width="20" height="4" rx="2"/><circle cx="2.700" cy="22.8" r="2.700"/><rect x="9" y="20.8" width="20" height="4" rx="2"/></g></svg>
<div style="left:2464px;top:875px;width:60px;height:60px;background:#ecf1f6;border-radius:7px"></div>
<svg style="left:2479px;top:891.8px;" width="30" height="26.5" viewBox="0 0 30 26.5"><rect width="30" height="26.500" rx="4.500" fill="#000"/><rect x="3.8" y="4.1" width="5" height="3.500" fill="#ecf1f6"/><rect x="12.5" y="4.1" width="5" height="3.500" fill="#ecf1f6"/><rect x="21.2" y="4.1" width="5" height="3.500" fill="#ecf1f6"/><rect x="3.8" y="11.5" width="5" height="3.500" fill="#ecf1f6"/><rect x="12.5" y="11.5" width="5" height="3.500" fill="#ecf1f6"/><rect x="21.2" y="11.5" width="5" height="3.500" fill="#ecf1f6"/><rect x="3.8" y="18.9" width="5" height="3.500" fill="#ecf1f6"/><rect x="12.5" y="18.9" width="5" height="3.500" fill="#ecf1f6"/><rect x="21.2" y="18.9" width="5" height="3.500" fill="#ecf1f6"/></svg>
<svg style="left:2548px;top:891px;" width="31" height="29" viewBox="0 0 31 29"><path d="M1.800 0H28.700a1.800 1.800 0 0 1 1.300 3L19.500 15V27.500a1.500 1.500 0 0 1-2.400 1.200L12.200 25a1.800 1.800 0 0 1-.7-1.400V15L.5 3A1.800 1.800 0 0 1 1.800 0z" fill="#000"/></svg>
<div style="left:2570px;top:879px;width:20px;height:20px;background:#ffdc00;border-radius:50%"></div>
<div style="left:1952px;top:945.5px;width:641.7px;height:59.3px;box-sizing:border-box;border:2px solid #b7c6d7;border-radius:8px;background:#ecf1f6"></div>
<svg style="left:1985px;top:963px;" width="25" height="25" viewBox="0 0 25 25"><path d="M12.500 1.800v21.400M1.800 12.500h21.400" stroke="#000" stroke-width="3.600" stroke-linecap="round"/></svg>
<span class="t" style="left:2026.6px;top:962.7px;font-size:28px;color:#000;transform:scaleX(0.9903);">Add new attachment</span>
<div style="left:1952px;top:1033.6px;width:309.5px;height:239px;box-sizing:border-box;border:2px solid #b7c6d7;border-radius:9px;background:#ecf1f6"></div>
<div style="left:2016px;top:1035.6px;width:182px;height:235px;background:#fff"></div>
<svg style="left:1940px;top:1020px" width="340" height="270" viewBox="0 0 1554 1234"><path d="M433 143H745" stroke="#4a4a4a" stroke-width="7" stroke-dasharray="26 5 44 5 17 5 35 5 58 5"/><path d="M433 181H848" stroke="#333" stroke-width="8" stroke-dasharray="26 5 44 5 17 5 35 5 58 5"/><path d="M433 212H1105" stroke="#999" stroke-width="2" stroke-dasharray="26 5 44 5 17 5 35 5 58 5"/><path d="M433 241H440" stroke="#4a4a4a" stroke-width="5.5"/><path d="M460 241.0H600" stroke="#4a4a4a" stroke-width="6" stroke-dasharray="26 5 44 5 17 5 35 5 58 5"/><path d="M433 272H440" stroke="#4a4a4a" stroke-width="5.5"/><path d="M460 272.0H520" stroke="#4a4a4a" stroke-width="6"/><path d="M433 303H440" stroke="#4a4a4a" stroke-width="5.5"/><path d="M460 303.0H590" stroke="#4a4a4a" stroke-width="6" stroke-dasharray="26 5 44 5 17 5 35 5 58 5"/><path d="M625 303.0H1080" stroke="#a2a2a2" stroke-width="5.5" stroke-dasharray="26 5 44 5 17 5 35 5 58 5"/><path d="M433 335H440" stroke="#4a4a4a" stroke-width="5.5"/><path d="M460 335.0H535" stroke="#4a4a4a" stroke-width="6" stroke-dasharray="26 5 44 5 17 5 35 5 58 5"/><path d="M625 335.0H1085" stroke="#a2a2a2" stroke-width="5.5" stroke-dasharray="26 5 44 5 17 5 35 5 58 5"/><path d="M625 350.7H650" stroke="#a2a2a2" stroke-width="5.5"/><path d="M433 374H440" stroke="#4a4a4a" stroke-width="5.5"/><path d="M460 374.0H592" stroke="#4a4a4a" stroke-width="6" stroke-dasharray="26 5 44 5 17 5 35 5 58 5"/><path d="M460 389.7H580" stroke="#4a4a4a" stroke-width="6" stroke-dasharray="26 5 44 5 17 5 35 5 58 5"/><path d="M460 405.4H565" stroke="#4a4a4a" stroke-width="6" stroke-dasharray="26 5 44 5 17 5 35 5 58 5"/><path d="M625 374.0H690" stroke="#a2a2a2" stroke-width="5.5" stroke-dasharray="26 5 44 5 17 5 35 5 58 5"/><path d="M628 389.7H634" stroke="#666" stroke-width="5"/><path d="M655 389.7H1098" stroke="#a2a2a2" stroke-width="5.5" stroke-dasharray="26 5 44 5 17 5 35 5 58 5"/><path d="M628 405.4H634" stroke="#666" stroke-width="5"/><path d="M655 405.4H945" stroke="#a2a2a2" stroke-width="5.5" stroke-dasharray="26 5 44 5 17 5 35 5 58 5"/><path d="M433 436H440" stroke="#4a4a4a" stroke-width="5.5"/><path d="M460 436.0H545" stroke="#4a4a4a" stroke-width="6" stroke-dasharray="26 5 44 5 17 5 35 5 58 5"/><path d="M625 436.0H690" stroke="#a2a2a2" stroke-width="5.5" stroke-dasharray="26 5 44 5 17 5 35 5 58 5"/><path d="M628 451.7H634" stroke="#666" stroke-width="5"/><path d="M655 451.7H1040" stroke="#a2a2a2" stroke-width="5.5" stroke-dasharray="26 5 44 5 17 5 35 5 58 5"/><path d="M628 467.4H634" stroke="#666" stroke-width="5"/><path d="M655 467.4H968" stroke="#a2a2a2" stroke-width="5.5" stroke-dasharray="26 5 44 5 17 5 35 5 58 5"/><path d="M628 483.1H634" stroke="#666" stroke-width="5"/><path d="M655 483.1H780" stroke="#a2a2a2" stroke-width="5.5" stroke-dasharray="26 5 44 5 17 5 35 5 58 5"/><path d="M628 498.8H634" stroke="#666" stroke-width="5"/><path d="M655 498.8H908" stroke="#a2a2a2" stroke-width="5.5" stroke-dasharray="26 5 44 5 17 5 35 5 58 5"/><path d="M628 514.5H634" stroke="#666" stroke-width="5"/><path d="M655 514.5H875" stroke="#a2a2a2" stroke-width="5.5" stroke-dasharray="26 5 44 5 17 5 35 5 58 5"/><path d="M628 530.2H634" stroke="#666" stroke-width="5"/><path d="M655 530.2H1088" stroke="#a2a2a2" stroke-width="5.5" stroke-dasharray="26 5 44 5 17 5 35 5 58 5"/><path d="M628 545.9H634" stroke="#666" stroke-width="5"/><path d="M655 545.9H930" stroke="#a2a2a2" stroke-width="5.5" stroke-dasharray="26 5 44 5 17 5 35 5 58 5"/><path d="M628 561.6H634" stroke="#666" stroke-width="5"/><path d="M655 561.6H1105" stroke="#a2a2a2" stroke-width="5.5" stroke-dasharray="26 5 44 5 17 5 35 5 58 5"/><path d="M628 577.3H634" stroke="#666" stroke-width="5"/><path d="M655 577.3H850" stroke="#a2a2a2" stroke-width="5.5" stroke-dasharray="26 5 44 5 17 5 35 5 58 5"/><path d="M628 593.0H634" stroke="#666" stroke-width="5"/><path d="M655 593.0H1010" stroke="#a2a2a2" stroke-width="5.5" stroke-dasharray="26 5 44 5 17 5 35 5 58 5"/><path d="M433 619H440" stroke="#4a4a4a" stroke-width="5.5"/><path d="M460 619.0H575" stroke="#4a4a4a" stroke-width="6" stroke-dasharray="26 5 44 5 17 5 35 5 58 5"/><path d="M625 619.0H690" stroke="#a2a2a2" stroke-width="5.5" stroke-dasharray="26 5 44 5 17 5 35 5 58 5"/><path d="M628 634.7H634" stroke="#666" stroke-width="5"/><path d="M655 634.7H1102" stroke="#a2a2a2" stroke-width="5.5" stroke-dasharray="26 5 44 5 17 5 35 5 58 5"/><path d="M433 658H440" stroke="#4a4a4a" stroke-width="5.5"/><path d="M460 658.0H565" stroke="#4a4a4a" stroke-width="6" stroke-dasharray="26 5 44 5 17 5 35 5 58 5"/><path d="M460 673.7H577" stroke="#4a4a4a" stroke-width="6" stroke-dasharray="26 5 44 5 17 5 35 5 58 5"/><path d="M625 658.0H690" stroke="#a2a2a2" stroke-width="5.5" stroke-dasharray="26 5 44 5 17 5 35 5 58 5"/><path d="M628 673.7H634" stroke="#666" stroke-width="5"/><path d="M655 673.7H1058" stroke="#a2a2a2" stroke-width="5.5" stroke-dasharray="26 5 44 5 17 5 35 5 58 5"/><path d="M628 689.4H634" stroke="#666" stroke-width="5"/><path d="M655 689.4H1075" stroke="#a2a2a2" stroke-width="5.5" stroke-dasharray="26 5 44 5 17 5 35 5 58 5"/><path d="M628 705.1H634" stroke="#666" stroke-width="5"/><path d="M655 705.1H760" stroke="#a2a2a2" stroke-width="5.5" stroke-dasharray="26 5 44 5 17 5 35 5 58 5"/><path d="M433 728H440" stroke="#4a4a4a" stroke-width="5.5"/><path d="M460 728.0H585" stroke="#4a4a4a" stroke-width="6" stroke-dasharray="26 5 44 5 17 5 35 5 58 5"/><path d="M625 728.0H1098" stroke="#a2a2a2" stroke-width="5.5" stroke-dasharray="26 5 44 5 17 5 35 5 58 5"/><path d="M625 743.7H888" stroke="#a2a2a2" stroke-width="5.5" stroke-dasharray="26 5 44 5 17 5 35 5 58 5"/><path d="M433 768H440" stroke="#4a4a4a" stroke-width="5.5"/><path d="M460 768.0H950" stroke="#4a4a4a" stroke-width="6" stroke-dasharray="26 5 44 5 17 5 35 5 58 5"/><path d="M433 831H440" stroke="#4a4a4a" stroke-width="5.5"/><path d="M460 831.0H572" stroke="#4a4a4a" stroke-width="6" stroke-dasharray="26 5 44 5 17 5 35 5 58 5"/><path d="M625 831.0H690" stroke="#a2a2a2" stroke-width="5.5" stroke-dasharray="26 5 44 5 17 5 35 5 58 5"/><path d="M628 846.7H634" stroke="#666" stroke-width="5"/><path d="M655 846.7H1068" stroke="#a2a2a2" stroke-width="5.5" stroke-dasharray="26 5 44 5 17 5 35 5 58 5"/><path d="M628 862.4H634" stroke="#666" stroke-width="5"/><path d="M655 862.4H800" stroke="#a2a2a2" stroke-width="5.5" stroke-dasharray="26 5 44 5 17 5 35 5 58 5"/><path d="M433 886H440" stroke="#4a4a4a" stroke-width="5.5"/><path d="M460 886.0H608" stroke="#4a4a4a" stroke-width="6" stroke-dasharray="26 5 44 5 17 5 35 5 58 5"/><path d="M625 886.0H690" stroke="#a2a2a2" stroke-width="5.5" stroke-dasharray="26 5 44 5 17 5 35 5 58 5"/><path d="M628 901.7H634" stroke="#666" stroke-width="5"/><path d="M655 901.7H1055" stroke="#a2a2a2" stroke-width="5.5" stroke-dasharray="26 5 44 5 17 5 35 5 58 5"/><path d="M433 800H470" stroke="#bbb" stroke-width="5.5"/><path d="M475 802H552" stroke="#d5d5d5" stroke-width="3" stroke-dasharray="26 5 44 5 17 5 35 5 58 5"/><path d="M433 925H440" stroke="#ccc" stroke-width="5.5"/><path d="M460 925H545" stroke="#ccc" stroke-width="6" stroke-dasharray="26 5 44 5 17 5 35 5 58 5"/><path d="M655 925.0H1098" stroke="#d2d2d2" stroke-width="5.5" stroke-dasharray="26 5 44 5 17 5 35 5 58 5"/><path d="M655 940.7H1100" stroke="#d2d2d2" stroke-width="5.5" stroke-dasharray="26 5 44 5 17 5 35 5 58 5"/><path d="M655 956.4H745" stroke="#d2d2d2" stroke-width="5.5" stroke-dasharray="26 5 44 5 17 5 35 5 58 5"/><path d="M433 980H440" stroke="#ccc" stroke-width="5.5"/><path d="M460 980H560" stroke="#ccc" stroke-width="6" stroke-dasharray="26 5 44 5 17 5 35 5 58 5"/><path d="M460 996H575" stroke="#ccc" stroke-width="6" stroke-dasharray="26 5 44 5 17 5 35 5 58 5"/></svg>
<div style="left:1962px;top:1219px;width:290.2px;height:43.8px;background:rgba(255,255,255,.86);border-radius:6px"></div>
<span class="t" style="left:1970.82px;top:1228.88px;font-size:24px;color:#000;transform:scaleX(0.9884);">Instructional sheet on w…</span>
<div style="left:2284.6px;top:1033.6px;width:309.2px;height:239px;box-sizing:border-box;border:2px solid #b7c6d7;border-radius:9px;background:#ecf1f6"></div>
<div style="left:2355px;top:1035.6px;width:168.2px;height:235px;background:#fff"></div>
<svg style="left:1900px;top:1020px" width="860.100" height="420" viewBox="0 0 2527 1234"><path d="M1562 68H1620" stroke="#555" stroke-width="3.5"/><path d="M1566 76H1616" stroke="#666" stroke-width="3"/><path d="M1575 85H1607" stroke="#999" stroke-width="2.5"/><path d="M1368 100H1458" stroke="#555" stroke-width="3" stroke-dasharray="13 3 22 3 9 3 17 3 29 3"/><path d="M1368 108H1452" stroke="#666" stroke-width="3" stroke-dasharray="13 3 22 3 9 3 17 3 29 3"/><rect x="1367" y="122" width="451" height="20" fill="none" stroke="#333" stroke-width="3.2"/><path d="M1385 122V142M1423 122V142M1640 122V142M1680 122V142M1703 122V142M1748 122V142" stroke="#333" stroke-width="2.4"/><path d="M1371 132.0H1381" stroke="#555" stroke-width="3"/><path d="M1393 132.0H1415" stroke="#555" stroke-width="3"/><path d="M1510 132.0H1552" stroke="#555" stroke-width="3"/><path d="M1648 132.0H1672" stroke="#555" stroke-width="3"/><path d="M1685 132.0H1698" stroke="#555" stroke-width="3"/><path d="M1712 132.0H1738" stroke="#555" stroke-width="3"/><path d="M1765 132.0H1800" stroke="#555" stroke-width="3"/><path d="M1395 157H1413" stroke="#444" stroke-width="3.5"/><path d="M1425 157H1470" stroke="#444" stroke-width="3.5"/><rect x="1367" y="163" width="451" height="34" fill="none" stroke="#333" stroke-width="3.2"/><path d="M1385 163V197M1423 163V197M1640 163V197M1680 163V197M1703 163V197M1748 163V197" stroke="#333" stroke-width="2.4"/><path d="M1428 170H1636" stroke="#8a8a8a" stroke-width="2.6" stroke-dasharray="13 3 22 3 9 3 17 3 29 3"/><path d="M1428 178H1636" stroke="#8a8a8a" stroke-width="2.6" stroke-dasharray="13 3 22 3 9 3 17 3 29 3"/><path d="M1428 186H1530" stroke="#8a8a8a" stroke-width="2.6" stroke-dasharray="13 3 22 3 9 3 17 3 29 3"/><path d="M1374 180.0H1379" stroke="#8a8a8a" stroke-width="3"/><path d="M1392 180.0H1416" stroke="#8a8a8a" stroke-width="3"/><path d="M1650 180.0H1670" stroke="#8a8a8a" stroke-width="3"/><path d="M1686 180.0H1697" stroke="#8a8a8a" stroke-width="3"/><rect x="1367" y="205" width="451" height="35" fill="none" stroke="#333" stroke-width="3.2"/><path d="M1385 205V240M1423 205V240M1640 205V240M1680 205V240M1703 205V240M1748 205V240" stroke="#333" stroke-width="2.4"/><path d="M1428 212H1636" stroke="#8a8a8a" stroke-width="2.6" stroke-dasharray="13 3 22 3 9 3 17 3 29 3"/><path d="M1428 220H1636" stroke="#8a8a8a" stroke-width="2.6" stroke-dasharray="13 3 22 3 9 3 17 3 29 3"/><path d="M1428 228H1575" stroke="#8a8a8a" stroke-width="2.6" stroke-dasharray="13 3 22 3 9 3 17 3 29 3"/><path d="M1374 222.5H1379" stroke="#8a8a8a" stroke-width="3"/><path d="M1392 222.5H1416" stroke="#8a8a8a" stroke-width="3"/><path d="M1650 222.5H1670" stroke="#8a8a8a" stroke-width="3"/><path d="M1686 222.5H1697" stroke="#8a8a8a" stroke-width="3"/><rect x="1367" y="247" width="451" height="25" fill="none" stroke="#333" stroke-width="3.2"/><path d="M1385 247V272M1423 247V272M1640 247V272M1680 247V272M1703 247V272M1748 247V272" stroke="#333" stroke-width="2.4"/><path d="M1428 254H1636" stroke="#8a8a8a" stroke-width="2.6" stroke-dasharray="13 3 22 3 9 3 17 3 29 3"/><path d="M1428 262H1569" stroke="#8a8a8a" stroke-width="2.6" stroke-dasharray="13 3 22 3 9 3 17 3 29 3"/><path d="M1374 259.5H1379" stroke="#8a8a8a" stroke-width="3"/><path d="M1392 259.5H1416" stroke="#8a8a8a" stroke-width="3"/><path d="M1650 259.5H1670" stroke="#8a8a8a" stroke-width="3"/><path d="M1686 259.5H1697" stroke="#8a8a8a" stroke-width="3"/><rect x="1367" y="278" width="451" height="23" fill="none" stroke="#333" stroke-width="3.2"/><path d="M1385 278V301M1423 278V301M1640 278V301M1680 278V301M1703 278V301M1748 278V301" stroke="#333" stroke-width="2.4"/><path d="M1428 285H1636" stroke="#8a8a8a" stroke-width="2.6" stroke-dasharray="13 3 22 3 9 3 17 3 29 3"/><path d="M1428 293H1516" stroke="#8a8a8a" stroke-width="2.6" stroke-dasharray="13 3 22 3 9 3 17 3 29 3"/><path d="M1374 289.5H1379" stroke="#8a8a8a" stroke-width="3"/><path d="M1392 289.5H1416" stroke="#8a8a8a" stroke-width="3"/><path d="M1650 289.5H1670" stroke="#8a8a8a" stroke-width="3"/><path d="M1686 289.5H1697" stroke="#8a8a8a" stroke-width="3"/><path d="M1395 318H1413" stroke="#444" stroke-width="3.5"/><path d="M1425 318H1530" stroke="#444" stroke-width="3.5" stroke-dasharray="13 3 22 3 9 3 17 3 29 3"/><rect x="1367" y="323" width="451" height="33" fill="none" stroke="#333" stroke-width="3.2"/><path d="M1385 323V356M1423 323V356M1640 323V356M1680 323V356M1703 323V356M1748 323V356" stroke="#333" stroke-width="2.4"/><path d="M1428 330H1636" stroke="#8a8a8a" stroke-width="2.6" stroke-dasharray="13 3 22 3 9 3 17 3 29 3"/><path d="M1428 338H1636" stroke="#8a8a8a" stroke-width="2.6" stroke-dasharray="13 3 22 3 9 3 17 3 29 3"/><path d="M1428 346H1547" stroke="#8a8a8a" stroke-width="2.6" stroke-dasharray="13 3 22 3 9 3 17 3 29 3"/><path d="M1374 339.5H1379" stroke="#8a8a8a" stroke-width="3"/><path d="M1392 339.5H1416" stroke="#8a8a8a" stroke-width="3"/><path d="M1650 339.5H1670" stroke="#8a8a8a" stroke-width="3"/><path d="M1686 339.5H1697" stroke="#8a8a8a" stroke-width="3"/><rect x="1367" y="364" width="451" height="34" fill="none" stroke="#333" stroke-width="3.2"/><path d="M1385 364V398M1423 364V398M1640 364V398M1680 364V398M1703 364V398M1748 364V398" stroke="#333" stroke-width="2.4"/><path d="M1428 371H1636" stroke="#8a8a8a" stroke-width="2.6" stroke-dasharray="13 3 22 3 9 3 17 3 29 3"/><path d="M1428 379H1636" stroke="#8a8a8a" stroke-width="2.6" stroke-dasharray="13 3 22 3 9 3 17 3 29 3"/><path d="M1428 387H1617" stroke="#8a8a8a" stroke-width="2.6" stroke-dasharray="13 3 22 3 9 3 17 3 29 3"/><path d="M1374 381.0H1379" stroke="#8a8a8a" stroke-width="3"/><path d="M1392 381.0H1416" stroke="#8a8a8a" stroke-width="3"/><path d="M1650 381.0H1670" stroke="#8a8a8a" stroke-width="3"/><path d="M1686 381.0H1697" stroke="#8a8a8a" stroke-width="3"/><path d="M1395 411H1413" stroke="#444" stroke-width="3.5"/><path d="M1425 411H1530" stroke="#444" stroke-width="3.5" stroke-dasharray="13 3 22 3 9 3 17 3 29 3"/><rect x="1367" y="416" width="451" height="34" fill="none" stroke="#333" stroke-width="3.2"/><path d="M1385 416V450M1423 416V450M1640 416V450M1680 416V450M1703 416V450M1748 416V450" stroke="#333" stroke-width="2.4"/><path d="M1428 423H1636" stroke="#8a8a8a" stroke-width="2.6" stroke-dasharray="13 3 22 3 9 3 17 3 29 3"/><path d="M1428 431H1636" stroke="#8a8a8a" stroke-width="2.6" stroke-dasharray="13 3 22 3 9 3 17 3 29 3"/><path d="M1428 439H1577" stroke="#8a8a8a" stroke-width="2.6" stroke-dasharray="13 3 22 3 9 3 17 3 29 3"/><path d="M1374 433.0H1379" stroke="#8a8a8a" stroke-width="3"/><path d="M1392 433.0H1416" stroke="#8a8a8a" stroke-width="3"/><path d="M1650 433.0H1670" stroke="#8a8a8a" stroke-width="3"/><path d="M1686 433.0H1697" stroke="#8a8a8a" stroke-width="3"/><rect x="1367" y="457" width="451" height="33" fill="none" stroke="#333" stroke-width="3.2"/><path d="M1385 457V490M1423 457V490M1640 457V490M1680 457V490M1703 457V490M1748 457V490" stroke="#333" stroke-width="2.4"/><path d="M1428 464H1636" stroke="#8a8a8a" stroke-width="2.6" stroke-dasharray="13 3 22 3 9 3 17 3 29 3"/><path d="M1428 472H1636" stroke="#8a8a8a" stroke-width="2.6" stroke-dasharray="13 3 22 3 9 3 17 3 29 3"/><path d="M1428 480H1560" stroke="#8a8a8a" stroke-width="2.6" stroke-dasharray="13 3 22 3 9 3 17 3 29 3"/><path d="M1374 473.5H1379" stroke="#8a8a8a" stroke-width="3"/><path d="M1392 473.5H1416" stroke="#8a8a8a" stroke-width="3"/><path d="M1650 473.5H1670" stroke="#8a8a8a" stroke-width="3"/><path d="M1686 473.5H1697" stroke="#8a8a8a" stroke-width="3"/><rect x="1367" y="498" width="451" height="35" fill="none" stroke="#333" stroke-width="3.2"/><path d="M1385 498V533M1423 498V533M1640 498V533M1680 498V533M1703 498V533M1748 498V533" stroke="#333" stroke-width="2.4"/><path d="M1428 505H1636" stroke="#8a8a8a" stroke-width="2.6" stroke-dasharray="13 3 22 3 9 3 17 3 29 3"/><path d="M1428 513H1636" stroke="#8a8a8a" stroke-width="2.6" stroke-dasharray="13 3 22 3 9 3 17 3 29 3"/><path d="M1428 521H1580" stroke="#8a8a8a" stroke-width="2.6" stroke-dasharray="13 3 22 3 9 3 17 3 29 3"/><path d="M1374 515.5H1379" stroke="#8a8a8a" stroke-width="3"/><path d="M1392 515.5H1416" stroke="#8a8a8a" stroke-width="3"/><path d="M1650 515.5H1670" stroke="#8a8a8a" stroke-width="3"/><path d="M1686 515.5H1697" stroke="#8a8a8a" stroke-width="3"/><rect x="1367" y="541" width="451" height="42" fill="none" stroke="#333" stroke-width="3.2"/><path d="M1385 541V583M1423 541V583M1640 541V583M1680 541V583M1703 541V583M1748 541V583" stroke="#333" stroke-width="2.4"/><path d="M1428 548H1636" stroke="#8a8a8a" stroke-width="2.6" stroke-dasharray="13 3 22 3 9 3 17 3 29 3"/><path d="M1428 556H1636" stroke="#8a8a8a" stroke-width="2.6" stroke-dasharray="13 3 22 3 9 3 17 3 29 3"/><path d="M1428 564H1636" stroke="#8a8a8a" stroke-width="2.6" stroke-dasharray="13 3 22 3 9 3 17 3 29 3"/><path d="M1428 572H1574" stroke="#8a8a8a" stroke-width="2.6" stroke-dasharray="13 3 22 3 9 3 17 3 29 3"/><path d="M1374 562.0H1379" stroke="#8a8a8a" stroke-width="3"/><path d="M1392 562.0H1416" stroke="#8a8a8a" stroke-width="3"/><path d="M1650 562.0H1670" stroke="#8a8a8a" stroke-width="3"/><path d="M1686 562.0H1697" stroke="#8a8a8a" stroke-width="3"/><rect x="1367" y="592" width="451" height="33" fill="none" stroke="#cfcfcf" stroke-width="2"/><path d="M1385 592V625M1423 592V625M1640 592V625M1680 592V625M1703 592V625M1748 592V625" stroke="#cfcfcf" stroke-width="1.5"/><path d="M1428 599H1636" stroke="#e0e0e0" stroke-width="2.6" stroke-dasharray="13 3 22 3 9 3 17 3 29 3"/><path d="M1428 607H1636" stroke="#e0e0e0" stroke-width="2.6" stroke-dasharray="13 3 22 3 9 3 17 3 29 3"/><path d="M1428 615H1508" stroke="#e0e0e0" stroke-width="2.6" stroke-dasharray="13 3 22 3 9 3 17 3 29 3"/><path d="M1374 608.5H1379" stroke="#e0e0e0" stroke-width="3"/><path d="M1392 608.5H1416" stroke="#e0e0e0" stroke-width="3"/><path d="M1650 608.5H1670" stroke="#e0e0e0" stroke-width="3"/><path d="M1686 608.5H1697" stroke="#e0e0e0" stroke-width="3"/><rect x="1367" y="633" width="451" height="45" fill="none" stroke="#cfcfcf" stroke-width="2"/><path d="M1385 633V678M1423 633V678M1640 633V678M1680 633V678M1703 633V678M1748 633V678" stroke="#cfcfcf" stroke-width="1.5"/><path d="M1428 640H1636" stroke="#e0e0e0" stroke-width="2.6" stroke-dasharray="13 3 22 3 9 3 17 3 29 3"/><path d="M1428 648H1636" stroke="#e0e0e0" stroke-width="2.6" stroke-dasharray="13 3 22 3 9 3 17 3 29 3"/><path d="M1428 656H1636" stroke="#e0e0e0" stroke-width="2.6" stroke-dasharray="13 3 22 3 9 3 17 3 29 3"/><path d="M1428 664H1577" stroke="#e0e0e0" stroke-width="2.6" stroke-dasharray="13 3 22 3 9 3 17 3 29 3"/><path d="M1374 655.5H1379" stroke="#e0e0e0" stroke-width="3"/><path d="M1392 655.5H1416" stroke="#e0e0e0" stroke-width="3"/><path d="M1650 655.5H1670" stroke="#e0e0e0" stroke-width="3"/><path d="M1686 655.5H1697" stroke="#e0e0e0" stroke-width="3"/><path d="M1575 722H1607" stroke="#aaa" stroke-width="2.5"/></svg>
<div style="left:2294px;top:1219px;width:229px;height:43.8px;background:rgba(255,255,255,.86);border-radius:6px"></div>
<span class="t" style="left:2304px;top:1228.88px;font-size:24px;color:#000;letter-spacing:0.06px;">Bill of quantities.pdf</span>
<div style="left:1952px;top:1303.5px;width:641.7px;height:59px;box-sizing:border-box;border:2px solid #b7c6d7;border-radius:4px;background:#fff"></div>
<span class="t" style="left:2142.42px;top:1318.5px;font-size:28px;color:#000;transform:scaleX(0.9794);">Show all attachments</span>
<svg style="left:1952.4px;top:1394px;" width="641.4" height="120" viewBox="0 0 641.4 120"><rect x="1.500" y="1.500" width="638.400" height="117" rx="6" fill="none" stroke="#bac7d5" stroke-width="3" stroke-dasharray="9 4.800"/></svg>
<span class="t" style="left:2183.4px;top:1439.1px;font-size:28px;color:#666;transform:scaleX(0.9765);">Drag files here</span></div>
<div style="left:2686px;top:228.5px;width:31px;height:1229px;box-sizing:border-box;background:#f8f8f8;border-left:1.500px solid #e5e5e5"></div>
<div style="left:2694px;top:235px;width:16px;height:507px;background:#bfbfbf;border-radius:8px"></div>
<div style="left:718.5px;top:1437.5px;width:1998.5px;height:20px;background:linear-gradient(to bottom,rgba(0,0,0,0),rgba(0,0,0,.035))"></div>
<div style="left:718.5px;top:1457.5px;width:1998.5px;height:99.5px;background:#fff;border-radius:0 0 8px 8px"></div>
<div style="left:2184px;top:1477px;width:239.5px;height:59.6px;background:#c3dcf0;border-radius:8px"></div>
<span class="t" style="left:2275.41px;top:1493.8px;font-size:28px;color:#f4f9fd;transform:scaleX(0.8900);">Save</span>
<div style="left:2444.5px;top:1477px;width:239.2px;height:59.6px;box-sizing:border-box;border:2px solid #b7c6d7;border-radius:8px;background:#fff"></div>
<span class="t" style="left:2529.44px;top:1493.8px;font-size:28px;color:#000;transform:scaleX(0.9627);">Close</span>
<div style="left:2273.4px;top:1022.7px;width:332.2px;height:260.5px;box-sizing:border-box;border:5px solid #ff8400;border-radius:9px"></div>
<div style="left:2533px;top:1042.5px;width:56px;height:56px;background:#ff8400;border-radius:50%"></div>
<span class="t" style="left:2551px;top:1052.78px;font-size:37px;color:#000;">3</span>
<svg style="left:2560px;top:820px;" width="160" height="210" viewBox="0 0 160 210"><path d="M120.700 21.500 L53.200 157.600" stroke="#ff8400" stroke-width="11.800" stroke-linecap="butt" fill="none"/><path d="M37.300 149.500 L68.800 165.600 L39.300 184.500 Z" fill="#ff8400" stroke="#ff8400" stroke-width="3" stroke-linejoin="round"/></svg>
<div style="left:3218px;top:1370px;width:100px;height:100px;background:#0563c8;border-radius:50%;box-shadow:0 2px 8px rgba(0,0,0,.25)"></div>
<span class="t" style="left:3246.5px;top:1385.15px;font-size:72px;color:#fff;font-weight:700;">?</span>
</div></body></html>
